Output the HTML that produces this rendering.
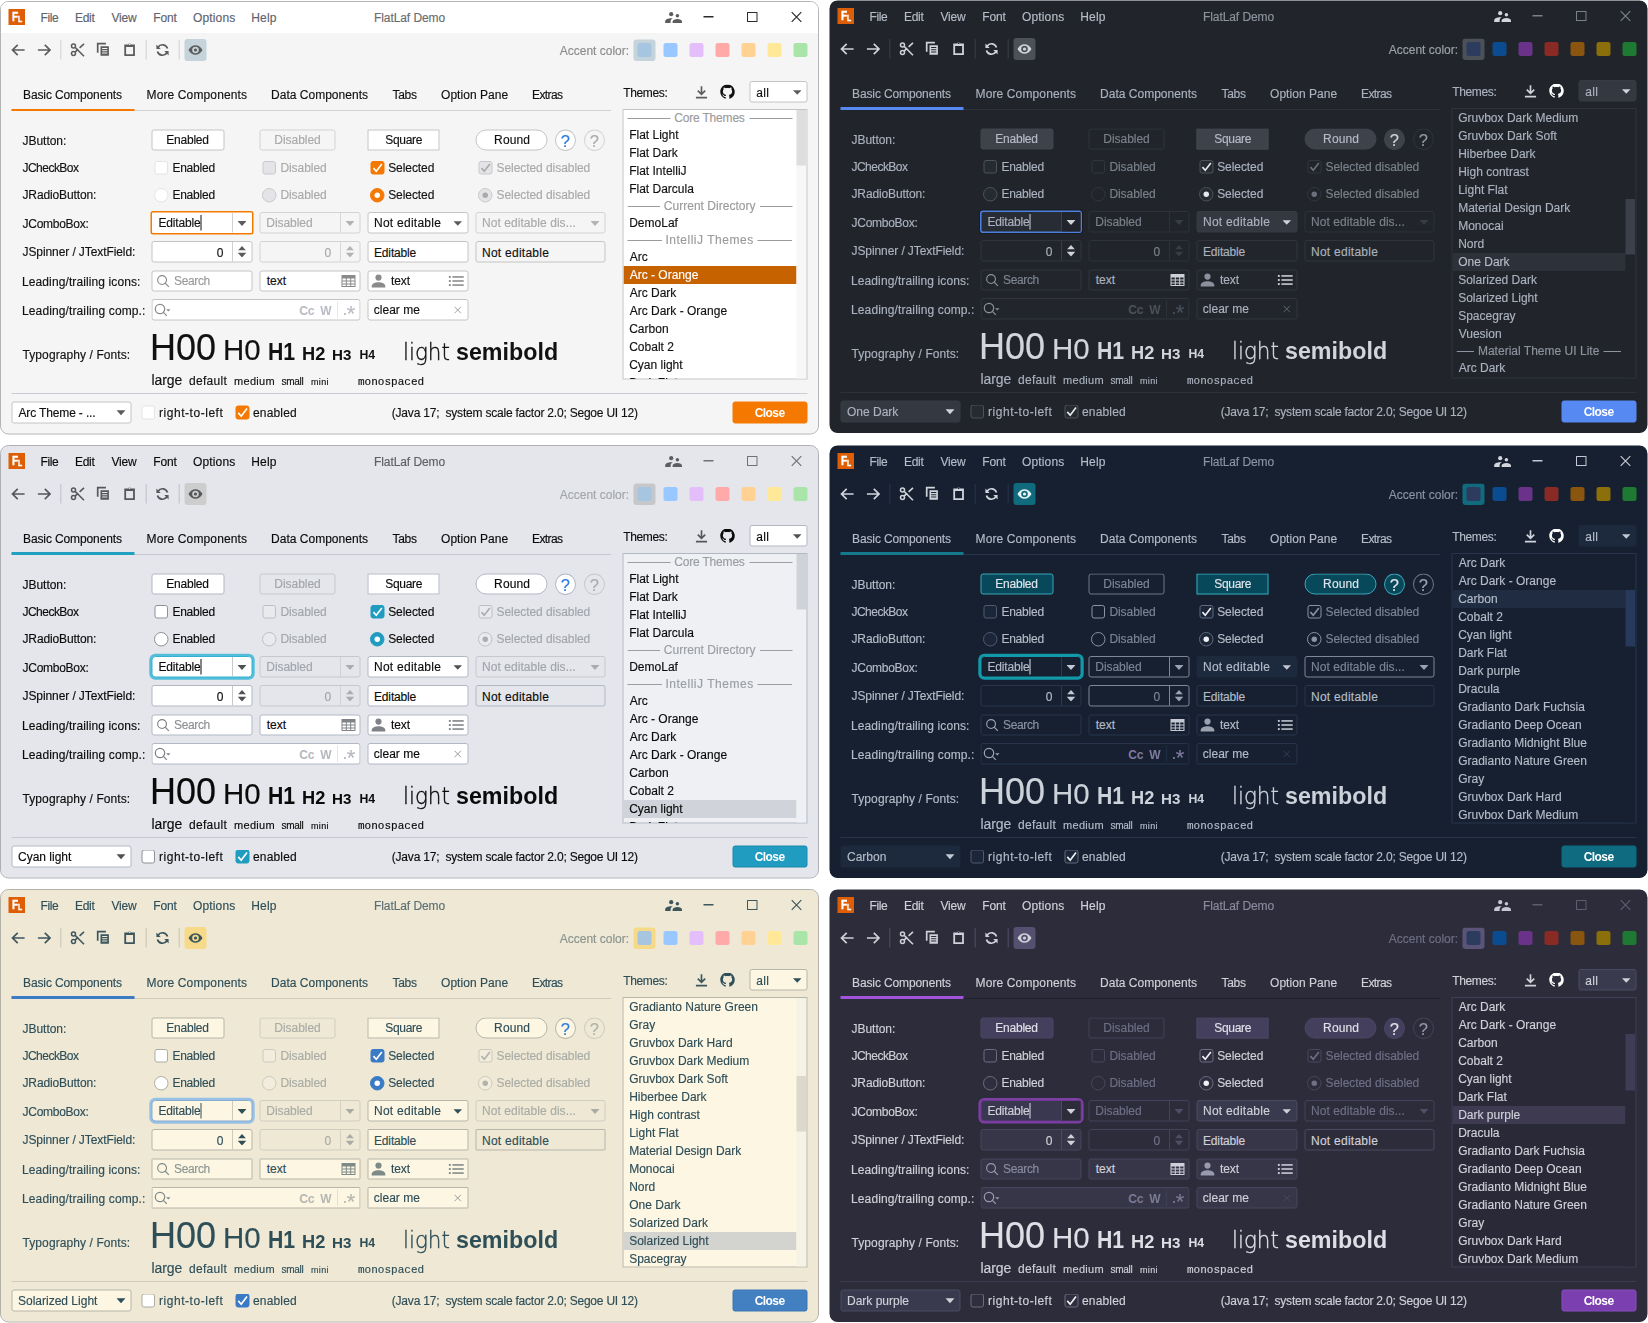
<!DOCTYPE html>
<html lang="en"><head><meta charset="utf-8"><title>FlatLaf Demo</title>
<style>
html,body{margin:0;padding:0;width:1648px;height:1323px;overflow:hidden;background:#fff}
#root{position:absolute;left:0;top:0;width:3296px;height:2646px;transform:scale(.5);transform-origin:0 0;font-family:"Liberation Sans",sans-serif}
.win{position:absolute;width:1640px;height:872px}
.win div,.win span,.win svg{position:absolute;box-sizing:border-box}
.frame{border-radius:17px;background:var(--bg);background-clip:padding-box;border:var(--wbw) solid var(--wbd);overflow:hidden}
.tb{background:var(--tbg)}
.t{white-space:pre;line-height:1;color:var(--fg);-webkit-text-stroke:.3px currentColor}
.dis{color:var(--fgd)}
.mn{color:var(--mfg)}
.ti{color:var(--tfg)}
.cat{color:var(--catfg)}
.b{font-weight:bold;-webkit-text-stroke:0}
.mono{font-family:"Liberation Mono",monospace}
.lt{font-family:"DejaVu Sans","Liberation Sans",sans-serif;font-weight:200;-webkit-text-stroke:.7px currentColor}
.i{color:var(--ic);overflow:visible}
.bx{border:2px solid;border-radius:5px}
.ln{background:var(--sep)}
</style></head>
<body>

<svg width="0" height="0" style="position:absolute"><defs>
<symbol id="back" viewBox="0 0 16 16"><path d="M14.6 8H3M7.7 2.8L2.5 8l5.2 5.2" fill="none" stroke="currentColor" stroke-width="1.7"/></symbol>
<symbol id="fwd" viewBox="0 0 16 16"><path d="M1.4 8H13M8.3 2.8L13.5 8l-5.2 5.2" fill="none" stroke="currentColor" stroke-width="1.7"/></symbol>
<symbol id="cut" viewBox="0 0 16 16"><g fill="none" stroke="currentColor" stroke-width="1.5"><circle cx="3.5" cy="3.9" r="2"/><circle cx="3.5" cy="11.6" r="2"/><path d="M5 5.3L14 14.2M5 10.2l3.2-3M9.6 5.8L14 1.8" stroke-width="1.6"/></g></symbol>
<symbol id="copy" viewBox="0 0 16 16"><path d="M2.2 10.8V1.7h8.2" fill="none" stroke="currentColor" stroke-width="1.7"/><path fill-rule="evenodd" fill="currentColor" d="M5 4.2h8.4v9.6H5zM6.6 6h5.2v1H6.6zM6.6 8.2h5.2v1H6.6zM6.6 10.4h5.2v1H6.6z"/></symbol>
<symbol id="paste" viewBox="0 0 16 16"><path fill-rule="evenodd" fill="currentColor" d="M2.3 2.4h3.5a2.1 1.6 0 0 1 3.6 0h3.5v11.6H2.3zM4.1 4.900v7.300h7V4.900zM6.6 2.4a1 .7 0 0 0 2 0a1 .7 0 0 0-2 0z"/></symbol>
<symbol id="refresh" viewBox="0 0 16 16"><g fill="none" stroke="currentColor" stroke-width="1.7"><path d="M13 6.6A5.2 5.2 0 0 0 3.6 5.2"/><path d="M3 9.4a5.2 5.2 0 0 0 9.4 1.4"/></g><path fill="currentColor" d="M1.9 2.6v4.3h4.3zM14.1 13.4V9.1H9.8z"/></symbol>
<symbol id="eye" viewBox="0 0 16 16"><path fill-rule="evenodd" fill="currentColor" d="M1 8C2.6 4.9 5.2 3.2 8 3.2S13.4 4.900 15 8c-1.600 3.100-4.200 4.800-7 4.800S2.600 11.100 1 8zM8 4.700a3.300 3.300 0 1 0 0 6.600a3.300 3.300 0 1 0 0-6.600zM8 6.400a1.600 1.600 0 1 1 0 3.200a1.600 1.600 0 1 1 0-3.200z"/></symbol>
<symbol id="users" viewBox="0 0 17 11.3"><g fill="currentColor"><circle cx="6.2" cy="2.1" r="2.1"/><circle cx="12.4" cy="3.7" r="1.75"/><path d="M0.2 10.8V9.3C0.2 7.200 3 6.100 6.400 6.100c0.600 0 1 0 1.400 0.100C6.200 7 5.600 8.200 5.600 9.600v1.200z"/><path d="M7.600 10.800V9.700c0-1.800 2.400-2.800 4.800-2.800s4.600 1 4.600 2.800v1.100z"/></g></symbol>
<symbol id="tri" viewBox="0 0 9 5"><path fill="currentColor" d="M0 0h9L4.500 5z"/></symbol>
<symbol id="triup" viewBox="0 0 9 5"><path fill="currentColor" d="M0 5h9L4.500 0z"/></symbol>
<symbol id="check" viewBox="0 0 14 14"><path d="M2.800 7.400l2.900 3.300l5.800-7.600" fill="none" stroke="currentColor" stroke-width="1.700"/></symbol>
<symbol id="search" viewBox="0 0 16 16"><g fill="none" stroke="currentColor" stroke-width="1.200"><circle cx="7" cy="7" r="4.700"/><path d="M10.400 10.400L14.300 14.300"/></g></symbol>
<symbol id="searchdd" viewBox="0 0 18 16"><g fill="none" stroke="currentColor" stroke-width="1.200"><circle cx="6.500" cy="7" r="4.700"/><path d="M9.900 10.400L13.300 13.800"/></g><path fill="currentColor" d="M12.600 7.200h4.400l-2.200 2.400z"/></symbol>
<symbol id="table" viewBox="0 0 16 16"><path fill-rule="evenodd" fill="currentColor" d="M1 2h14v12H1zM2 5.500v2h3.300v-2zM6.300 5.500v2h3.400v-2zM10.700 5.500v2H14v-2zM2 8.500v2h3.300v-2zM6.300 8.500v2h3.400v-2zM10.700 8.500v2H14v-2zM2 11.500V13h3.300v-1.500zM6.300 11.500V13h3.400v-1.500zM10.700 11.500V13H14v-1.500z"/></symbol>
<symbol id="user" viewBox="0 0 16 16"><g fill="currentColor"><circle cx="8" cy="4.600" r="3.100"/><path d="M1.200 14.500v-1.300c0-2.600 3.600-4 6.800-4s6.800 1.400 6.800 4v1.300z"/></g></symbol>
<symbol id="listi" viewBox="0 0 16 12"><g fill="currentColor"><rect x="0.300" y="0.800" width="2" height="2"/><rect x="0.300" y="5" width="2" height="2"/><rect x="0.300" y="9.200" width="2" height="2"/><rect x="4" y="1" width="11.700" height="1.600"/><rect x="4" y="5.200" width="11.700" height="1.600"/><rect x="4" y="9.400" width="11.700" height="1.600"/></g></symbol>
<symbol id="xx" viewBox="0 0 10 10"><path d="M1 1l8 8M9 1l-8 8" fill="none" stroke="currentColor" stroke-width="1"/></symbol>
<symbol id="dl" viewBox="0 0 14 14"><path d="M7 0.500v8.500M3 5.300l4 4l4-4M1 12.800h12" fill="none" stroke="currentColor" stroke-width="1.800"/></symbol>
<symbol id="gh" viewBox="0 0 16 16"><path fill="currentColor" d="M8 0C3.580 0 0 3.580 0 8c0 3.540 2.290 6.530 5.470 7.590.4.070.55-.17.55-.38 0-.19-.01-.82-.01-1.490-2.010.37-2.530-.49-2.690-.94-.09-.23-.48-.94-.82-1.130-.28-.15-.68-.52-.01-.53.630-.01 1.080.58 1.230.82.720 1.210 1.870.87 2.330.66.070-.52.280-.87.510-1.070-1.780-.2-3.640-.89-3.640-3.950 0-.87.310-1.590.82-2.150-.08-.2-.36-1.020.08-2.120 0 0 .67-.21 2.200.82.640-.18 1.320-.27 2-.27s1.360.09 2 .27c1.530-1.040 2.200-.82 2.200-.82.440 1.100.16 1.920.08 2.120.51.560.82 1.270.82 2.150 0 3.070-1.870 3.750-3.650 3.950.29.250.54.730.54 1.480 0 1.070-.01 1.930-.01 2.200 0 .21.150.46.550.38A8.013 8.013 0 0 0 16 8c0-4.420-3.580-8-8-8z"/></symbol>
</defs></svg>
<div id="root">
<div class="win" style="left:0px;top:0px;--bg:#f5f5f5;--tbg:#ffffff;--wbd:#b4b4b4;--fg:#111111;--fgd:#a9a9a9;--mfg:#5e636d;--tfg:#6c6c6c;--tic:#2b2b2b;--ic:#5c5c5c;--tsep:#dcdde0;--tgl:#c5d3da;--acfg:#8c8c8c;--swsel:#c5d3da;--tabline:#d1d1d1;--acc:#f57900;--btnbg:#ffffff;--btnbd:#c4c4c4;--btndbg:#f5f5f5;--btndbd:#d3d3d3;--helpfg:#2d7ce0;--helpdfg:#ababab;--cbbg:#ffffff;--cbbd:#e3e3ea;--cbdbg:#e4e4e8;--cbdbd:#c9c9c9;--cbsbg:#f57900;--cbsbd:#f57900;--cbck:#ffffff;--cbsdbg:#e4e4e8;--cbsdbd:#c9c9c9;--cbsdck:#a9a9a9;--rdot:#ffffff;--cobg:#ffffff;--cobd:#c4c4c4;--codbg:#f5f5f5;--codbd:#d3d3d3;--coar:#5c5c5c;--codar:#b3b3b3;--cosep:#d0d0d0;--codsep:#d8d8d8;--focus:#f57900;--fbg:#ffffff;--fbd:#c4c4c4;--fdbg:#f5f5f5;--fdbd:#d3d3d3;--fnebg:#f5f5f5;--fic:#8a8a8a;--ficd:#b8bcc4;--ph:#9a9a9a;--lbg:#ffffff;--lbd:#c4c4c4;--lsel:#c76200;--lselfg:#ffffff;--catfg:#9b9b9b;--catln:#9b9b9b;--sbtrack:#f7f7f7;--sbthumb:#dddee0;--sep:#c9ccd3;--clbg:#f57900;--clbd:#f57900;--clfg:#ffffff;--caret:#111111;--focus2:#f57900;--uic:#5c5c5c;--eyeic:#5c5c5c;--btnfg:#111111;--helpbg:#ffffff;--helpbd:#c4c4c4;--helpdbg:#f5f5f5;--fnebd:#c4c4c4;--xic:#8a8a8a;--ghic:#111111;--fic2:#8a8a8a;--hfg:#111111;--tfrad:5px;--wbw:2px;--cebg:#ffffff;--cobtn:#ffffff"><div class="frame" style="left:0px;top:2px;width:1638px;height:867px;"></div>
<div class="tb" style="left:2px;top:4px;width:1634px;height:62px;border-radius:15px 15px 0 0"></div>
<div style="left:17px;top:18px;width:33px;height:32px;background:#dd5e05"></div>
<span class="t b" style="left:24px;top:20px;font-size:26px;color:#fff;-webkit-text-stroke:.8px #fff;transform:scaleX(.78);transform-origin:0 0">F</span>
<span class="t b" style="left:35.5px;top:26.5px;font-size:19px;color:#fff;-webkit-text-stroke:.8px #fff;transform:scaleX(.72);transform-origin:0 0">L</span>
<span class="t mn" style="left:81.0px;top:23.5px;font-size:24px;letter-spacing:-0.71px;">File</span>
<span class="t mn" style="left:150.0px;top:23.5px;font-size:24px;letter-spacing:-0.56px;">Edit</span>
<span class="t mn" style="left:223.2px;top:23.5px;font-size:24px;letter-spacing:-0.55px;">View</span>
<span class="t mn" style="left:306.6px;top:23.5px;font-size:24px;letter-spacing:-0.25px;">Font</span>
<span class="t mn" style="left:386.0px;top:23.5px;font-size:24px;letter-spacing:0.28px;">Options</span>
<span class="t mn" style="left:502.6px;top:23.5px;font-size:24px;letter-spacing:0.26px;">Help</span>
<span class="t ti" style="left:748.0px;top:23.5px;font-size:24px;letter-spacing:-0.16px;">FlatLaf Demo</span>
<svg class="i " style="left:1330px;top:24px;color:var(--uic)" width="34" height="23"><use href="#users"/></svg>
<div class="" style="left:1407px;top:32px;width:20px;height:3px;background:var(--tic)"></div>
<div class="" style="left:1494px;top:24px;width:21px;height:20px;border:2px solid var(--tic);border-radius:1px"></div>
<svg class="i " style="left:1581px;top:22px;color:var(--tic)" width="24" height="24"><use href="#xx"/></svg>
<svg class="i " style="left:20px;top:84px;" width="32" height="32"><use href="#back"/></svg>
<svg class="i " style="left:73px;top:84px;" width="32" height="32"><use href="#fwd"/></svg>
<div class="" style="left:120px;top:80px;width:3px;height:39px;background:var(--tsep)"></div>
<svg class="i " style="left:140px;top:84px;" width="32" height="32"><use href="#cut"/></svg>
<svg class="i " style="left:191px;top:84px;" width="32" height="32"><use href="#copy"/></svg>
<svg class="i " style="left:244px;top:84px;" width="32" height="32"><use href="#paste"/></svg>
<div class="" style="left:291px;top:80px;width:3px;height:39px;background:var(--tsep)"></div>
<svg class="i " style="left:309px;top:84px;" width="32" height="32"><use href="#refresh"/></svg>
<div class="" style="left:357px;top:80px;width:3px;height:39px;background:var(--tsep)"></div>
<div class="" style="left:369px;top:78px;width:44px;height:44px;background:var(--tgl);border-radius:6px"></div>
<svg class="i " style="left:375px;top:84px;color:var(--eyeic)" width="32" height="32"><use href="#eye"/></svg>
<span class="t " style="left:1119.6px;top:89.5px;font-size:24px;letter-spacing:-0.02px;color:var(--acfg)">Accent color:</span>
<div class="" style="left:1267px;top:79px;width:44px;height:43px;background:var(--swsel);border-radius:6px"></div>
<div class="" style="left:1275px;top:86px;width:28px;height:28px;background:#a5c5e0;border-radius:5px"></div>
<div class="" style="left:1327px;top:86px;width:28px;height:28px;background:#99c7ff;border-radius:5px"></div>
<div class="" style="left:1379px;top:86px;width:28px;height:28px;background:#e4bdfb;border-radius:5px"></div>
<div class="" style="left:1431px;top:86px;width:28px;height:28px;background:#ffa9a9;border-radius:5px"></div>
<div class="" style="left:1483px;top:86px;width:28px;height:28px;background:#ffd294;border-radius:5px"></div>
<div class="" style="left:1535px;top:86px;width:28px;height:28px;background:#ffe999;border-radius:5px"></div>
<div class="" style="left:1587px;top:86px;width:28px;height:28px;background:#a9e5a9;border-radius:5px"></div>
<span class="t " style="left:46.0px;top:176.7px;font-size:24px;letter-spacing:-0.23px;">Basic Components</span>
<span class="t " style="left:293.0px;top:176.7px;font-size:24px;letter-spacing:0.26px;">More Components</span>
<span class="t " style="left:542.0px;top:176.7px;font-size:24px;letter-spacing:0.04px;">Data Components</span>
<span class="t " style="left:785.0px;top:176.7px;font-size:24px;letter-spacing:-0.57px;">Tabs</span>
<span class="t " style="left:882.0px;top:176.7px;font-size:24px;letter-spacing:0.09px;">Option Pane</span>
<span class="t " style="left:1064.0px;top:176.7px;font-size:24px;letter-spacing:-1.20px;">Extras</span>
<div class="" style="left:23px;top:220px;width:1199px;height:2px;background:var(--tabline)"></div>
<div class="" style="left:23px;top:218px;width:246px;height:4px;background:var(--acc)"></div>
<span class="t " style="left:45.0px;top:269.1px;font-size:24px;letter-spacing:-0.06px;">JButton:</span>
<span class="t " style="left:45.0px;top:324.3px;font-size:24px;letter-spacing:-1.05px;">JCheckBox</span>
<span class="t " style="left:45.0px;top:378.3px;font-size:24px;letter-spacing:-0.26px;">JRadioButton:</span>
<span class="t " style="left:45.0px;top:434.9px;font-size:24px;letter-spacing:-0.52px;">JComboBox:</span>
<span class="t " style="left:45.0px;top:492.1px;font-size:24px;letter-spacing:-0.18px;">JSpinner / JTextField:</span>
<span class="t " style="left:44.0px;top:551.3px;font-size:24px;letter-spacing:0.21px;">Leading/trailing icons:</span>
<span class="t " style="left:44.0px;top:609.1px;font-size:24px;letter-spacing:0.24px;">Leading/trailing comp.:</span>
<span class="t " style="left:45.0px;top:697.9px;font-size:24px;letter-spacing:0.18px;">Typography / Fonts:</span>
<div class="bx" style="left:303px;top:259px;width:146px;height:42px;background:var(--btnbg);border-color:var(--btnbd)"></div>
<span class="t " style="left:332.6px;top:267.9px;font-size:24px;letter-spacing:-0.46px;color:var(--btnfg)">Enabled</span>
<div class="bx" style="left:519px;top:259px;width:152px;height:42px;background:var(--btndbg);border-color:var(--btndbd)"></div>
<span class="t dis" style="left:548.6px;top:267.9px;font-size:24px;letter-spacing:-0.06px;">Disabled</span>
<div class="bx" style="left:735px;top:259px;width:144px;height:42px;background:var(--btnbg);border-color:var(--btnbd);border-radius:0"></div>
<span class="t " style="left:770.4px;top:267.9px;font-size:24px;letter-spacing:-0.57px;color:var(--btnfg)">Square</span>
<div class="bx" style="left:951px;top:259px;width:144px;height:42px;background:var(--btnbg);border-color:var(--btnbd);border-radius:22px"></div>
<span class="t " style="left:988.2px;top:267.9px;font-size:24px;letter-spacing:0.26px;color:var(--btnfg)">Round</span>
<div class="bx" style="left:1110px;top:259px;width:42px;height:43px;background:var(--helpbg);border-color:var(--helpbd);border-radius:50%"></div>
<span class="t " style="left:1121.4px;top:265.1px;font-size:33px;color:var(--helpfg)">?</span>
<div class="bx" style="left:1168px;top:259px;width:42px;height:43px;background:var(--helpdbg);border-color:var(--btndbd);border-radius:50%"></div>
<span class="t " style="left:1179.4px;top:265.1px;font-size:33px;color:var(--helpdfg)">?</span>
<div class="bx" style="left:309px;top:322px;width:27px;height:27px;background:var(--cbbg);border-color:var(--cbbd);border-radius:5px"></div>
<span class="t " style="left:344.8px;top:324.3px;font-size:24px;letter-spacing:-0.46px;">Enabled</span>
<div class="bx" style="left:525px;top:322px;width:27px;height:27px;background:var(--cbdbg);border-color:var(--cbdbd);border-radius:5px"></div>
<span class="t dis" style="left:560.8px;top:324.3px;font-size:24px;letter-spacing:-0.12px;">Disabled</span>
<div class="bx" style="left:741px;top:322px;width:28px;height:27px;background:var(--cbsbg);border-color:var(--cbsbd);border-radius:5px"></div>
<svg class="i " style="left:741px;top:322px;color:var(--cbck)" width="28" height="27"><use href="#check"/></svg>
<span class="t " style="left:776.4px;top:324.3px;font-size:24px;letter-spacing:-0.15px;">Selected</span>
<div class="bx" style="left:957px;top:322px;width:28px;height:27px;background:var(--cbsdbg);border-color:var(--cbsdbd);border-radius:5px"></div>
<svg class="i " style="left:957px;top:322px;color:var(--cbsdck)" width="28" height="27"><use href="#check"/></svg>
<span class="t dis" style="left:993.0px;top:324.3px;font-size:24px;letter-spacing:-0.12px;">Selected disabled</span>
<div class="bx" style="left:308px;top:376px;width:29px;height:29px;background:var(--cbbg);border-color:var(--cbbd);border-radius:50%"></div>
<span class="t " style="left:344.8px;top:378.3px;font-size:24px;letter-spacing:-0.46px;">Enabled</span>
<div class="bx" style="left:524px;top:376px;width:29px;height:29px;background:var(--cbdbg);border-color:var(--cbdbd);border-radius:50%"></div>
<span class="t dis" style="left:560.8px;top:378.3px;font-size:24px;letter-spacing:-0.12px;">Disabled</span>
<div class="bx" style="left:740px;top:376px;width:29px;height:29px;background:var(--cbsbg);border-color:var(--cbsbd);border-radius:50%"></div>
<div class="" style="left:749px;top:385px;width:11px;height:11px;background:var(--rdot);border-radius:50%"></div>
<span class="t " style="left:776.4px;top:378.3px;font-size:24px;letter-spacing:-0.15px;">Selected</span>
<div class="bx" style="left:956px;top:376px;width:29px;height:29px;background:var(--cbsdbg);border-color:var(--cbsdbd);border-radius:50%"></div>
<div class="" style="left:965px;top:385px;width:11px;height:11px;background:var(--cbsdck);border-radius:50%"></div>
<span class="t dis" style="left:993.0px;top:378.3px;font-size:24px;letter-spacing:-0.12px;">Selected disabled</span>
<div class="bx" style="left:301px;top:422px;width:206px;height:47px;background:var(--cebg);border-color:var(--focus);border-width:3.2px;box-shadow:0 0 0 0px var(--focus2);border-radius:5.0px"></div>
<div class="" style="left:464px;top:426px;width:2px;height:39px;background:var(--cosep)"></div>
<svg class="i " style="left:475px;top:442px;color:var(--coar)" width="18" height="10"><use href="#tri"/></svg>
<span class="t " style="left:316.8px;top:433.9px;font-size:24px;letter-spacing:-0.31px;">Editable</span>
<div class="" style="left:401px;top:430px;width:2px;height:31px;background:var(--caret)"></div>
<div class="bx" style="left:519px;top:424px;width:202px;height:43px;background:var(--codbg);border-color:var(--codbd)"></div>
<div class="" style="left:680px;top:426px;width:2px;height:39px;background:var(--codsep)"></div>
<svg class="i " style="left:691px;top:442px;color:var(--codar)" width="18" height="10"><use href="#tri"/></svg>
<span class="t dis" style="left:532.6px;top:433.9px;font-size:24px;letter-spacing:-0.09px;">Disabled</span>
<div class="bx" style="left:735px;top:424px;width:202px;height:43px;background:var(--cobg);border-color:var(--cobd)"></div>
<svg class="i " style="left:907px;top:442px;color:var(--coar)" width="17" height="10"><use href="#tri"/></svg>
<span class="t " style="left:748.0px;top:433.9px;font-size:24px;letter-spacing:0.51px;">Not editable</span>
<div class="bx" style="left:951px;top:424px;width:260px;height:43px;background:var(--codbg);border-color:var(--codbd)"></div>
<svg class="i " style="left:1181px;top:442px;color:var(--codar)" width="18" height="10"><use href="#tri"/></svg>
<span class="t dis" style="left:964.0px;top:433.9px;font-size:24px;letter-spacing:0.12px;">Not editable dis...</span>
<div class="bx" style="left:303px;top:482px;width:202px;height:43px;background:var(--fbg);border-color:var(--fbd)"></div>
<div class="" style="left:464px;top:484px;width:2px;height:39px;background:var(--cosep)"></div>
<svg class="i " style="left:475px;top:492px;color:var(--coar)" width="18" height="9"><use href="#triup"/></svg>
<svg class="i " style="left:475px;top:505px;color:var(--coar)" width="18" height="10"><use href="#tri"/></svg>
<span class="t " style="left:433.6px;top:493.1px;font-size:24px;">0</span>
<div class="bx" style="left:519px;top:482px;width:202px;height:43px;background:var(--fdbg);border-color:var(--fdbd)"></div>
<div class="" style="left:680px;top:484px;width:2px;height:39px;background:var(--codsep)"></div>
<svg class="i " style="left:691px;top:492px;color:var(--codar)" width="18" height="9"><use href="#triup"/></svg>
<svg class="i " style="left:691px;top:505px;color:var(--codar)" width="18" height="10"><use href="#tri"/></svg>
<span class="t dis" style="left:649.2px;top:493.1px;font-size:24px;">0</span>
<div class="bx" style="left:735px;top:482px;width:202px;height:43px;background:var(--fbg);border-color:var(--fbd);border-radius:var(--tfrad)"></div>
<span class="t " style="left:748.0px;top:493.1px;font-size:24px;letter-spacing:-0.31px;">Editable</span>
<div class="bx" style="left:951px;top:482px;width:260px;height:43px;background:var(--fnebg);border-color:var(--fnebd);border-radius:var(--tfrad)"></div>
<span class="t " style="left:964.0px;top:493.1px;font-size:24px;letter-spacing:0.51px;">Not editable</span>
<div class="bx" style="left:303px;top:541px;width:202px;height:42px;background:var(--fbg);border-color:var(--fbd);border-radius:var(--tfrad)"></div>
<svg class="i " style="left:311px;top:547px;color:var(--fic)" width="30" height="30"><use href="#search"/></svg>
<span class="t " style="left:348.2px;top:549.9px;font-size:24px;letter-spacing:-0.78px;color:var(--ph)">Search</span>
<div class="bx" style="left:519px;top:541px;width:202px;height:42px;background:var(--fbg);border-color:var(--fbd);border-radius:var(--tfrad)"></div>
<span class="t " style="left:533.6px;top:549.9px;font-size:24px;letter-spacing:-0.07px;">text</span>
<svg class="i " style="left:681px;top:546px;color:var(--fic2)" width="32" height="32"><use href="#table"/></svg>
<div class="bx" style="left:735px;top:541px;width:202px;height:42px;background:var(--fbg);border-color:var(--fbd);border-radius:var(--tfrad)"></div>
<svg class="i " style="left:741px;top:546px;color:var(--fic)" width="32" height="32"><use href="#user"/></svg>
<span class="t " style="left:781.8px;top:549.9px;font-size:24px;letter-spacing:-0.07px;">text</span>
<svg class="i " style="left:897px;top:550px;color:var(--fic2)" width="31" height="24"><use href="#listi"/></svg>
<div class="bx" style="left:303px;top:598px;width:418px;height:43px;background:var(--fbg);border-color:var(--fbd);border-radius:var(--tfrad)"></div>
<svg class="i " style="left:307px;top:604px;color:var(--fic)" width="36" height="32"><use href="#searchdd"/></svg>
<span class="t b" style="left:598.4px;top:608.5px;font-size:24px;letter-spacing:-0.33px;color:var(--ficd)">Cc</span>
<span class="t b" style="left:640.4px;top:608.5px;font-size:24px;color:var(--ficd)">W</span>
<div class="" style="left:675px;top:603px;width:1px;height:33px;background:var(--cosep)"></div>
<span class="t b" style="left:686.6px;top:608.5px;font-size:24px;color:var(--ficd)">.</span>
<span class="t " style="left:693.6px;top:605.4px;font-size:44px;color:var(--ficd)">*</span>
<div class="bx" style="left:735px;top:598px;width:202px;height:43px;background:var(--fbg);border-color:var(--fbd);border-radius:var(--tfrad)"></div>
<span class="t " style="left:747.6px;top:608.3px;font-size:24px;letter-spacing:0.02px;">clear me</span>
<svg class="i " style="left:907px;top:612px;color:var(--xic)" width="17" height="16"><use href="#xx"/></svg>
<span class="t " style="left:300.0px;top:658.9px;font-size:72px;transform:scaleX(1.000);transform-origin:0 0;color:var(--hfg)">H00</span>
<span class="t " style="left:446.1px;top:669.0px;font-size:60px;transform:scaleX(0.981);transform-origin:0 0;color:var(--hfg)">H0</span>
<span class="t b" style="left:536.3px;top:679.2px;font-size:48px;transform:scaleX(0.884);transform-origin:0 0;color:var(--hfg)">H1</span>
<span class="t b" style="left:604.4px;top:689.3px;font-size:36px;transform:scaleX(1.014);transform-origin:0 0;color:var(--hfg)">H2</span>
<span class="t b" style="left:664.4px;top:694.4px;font-size:30px;transform:scaleX(1.009);transform-origin:0 0;color:var(--hfg)">H3</span>
<span class="t b" style="left:719.0px;top:697.5px;font-size:24px;transform:scaleX(1.022);transform-origin:0 0;color:var(--hfg)">H4</span>
<span class="t lt" style="left:806.2px;top:681.7px;font-size:45px;transform:scaleX(0.955);transform-origin:0 0;color:var(--hfg)">light</span>
<span class="t b" style="left:912.0px;top:679.2px;font-size:48px;transform:scaleX(0.969);transform-origin:0 0;color:var(--hfg)">semibold</span>
<span class="t " style="left:303.0px;top:745.7px;font-size:28px;letter-spacing:-0.17px;">large</span>
<span class="t " style="left:378.0px;top:749.1px;font-size:24px;letter-spacing:0.60px;">default</span>
<span class="t " style="left:468.0px;top:750.8px;font-size:22px;letter-spacing:0.62px;">medium</span>
<span class="t " style="left:563.0px;top:751.5px;font-size:20px;letter-spacing:-0.56px;">small</span>
<span class="t " style="left:622.0px;top:754.2px;font-size:18px;letter-spacing:0.67px;">mini</span>
<span class="t mono" style="left:716.0px;top:752.5px;font-size:22px;letter-spacing:0.02px;">monospaced</span>
<div class="ln" style="left:23px;top:786px;width:1592px;height:2px;"></div>
<div class="bx" style="left:23px;top:803px;width:240px;height:44px;background:var(--cobg);border-color:var(--cobd)"></div>
<span class="t " style="left:37.0px;top:814.3px;font-size:24px;letter-spacing:-0.29px;">Arc Theme - ...</span>
<svg class="i " style="left:233px;top:820px;color:var(--coar)" width="18" height="11"><use href="#tri"/></svg>
<div class="bx" style="left:283px;top:811px;width:27px;height:28px;background:var(--cbbg);border-color:var(--cbbd);border-radius:5px"></div>
<span class="t " style="left:318.0px;top:814.3px;font-size:24px;letter-spacing:1.08px;">right-to-left</span>
<div class="bx" style="left:471px;top:811px;width:28px;height:28px;background:var(--cbsbg);border-color:var(--cbsbd);border-radius:5px"></div>
<svg class="i " style="left:471px;top:811px;color:var(--cbck)" width="28" height="28"><use href="#check"/></svg>
<span class="t " style="left:506.0px;top:814.3px;font-size:24px;letter-spacing:0.32px;">enabled</span>
<span class="t " style="left:783.6px;top:814.3px;font-size:24px;letter-spacing:-0.42px;">(Java 17;  system scale factor 2.0; Segoe UI 12)</span>
<div class="bx" style="left:1465px;top:803px;width:150px;height:44px;background:var(--clbg);border-color:var(--clbd)"></div>
<span class="t b" style="left:1509.4px;top:814.3px;font-size:24px;letter-spacing:-1.15px;color:var(--clfg)">Close</span>
<span class="t " style="left:1246.4px;top:173.1px;font-size:24px;letter-spacing:-0.68px;">Themes:</span>
<svg class="i " style="left:1390px;top:171px;color:var(--ic)" width="26" height="27"><use href="#dl"/></svg>
<svg class="i " style="left:1440px;top:169px;color:var(--ghic)" width="30" height="29"><use href="#gh"/></svg>
<div class="bx" style="left:1499px;top:162px;width:116px;height:43px;background:var(--cobg);border-color:var(--cobd)"></div>
<span class="t " style="left:1512.6px;top:173.1px;font-size:24px;letter-spacing:0.66px;">all</span>
<svg class="i " style="left:1586px;top:180px;color:var(--coar)" width="17" height="10"><use href="#tri"/></svg>
<div class="bx" style="left:1245px;top:218px;width:370px;height:541px;background:var(--lbg);border-color:var(--lbd);border-radius:0;overflow:hidden"><div style="left:8px;top:16px;width:86px;height:2px;background:var(--catln)"></div><div style="left:252px;top:16px;width:86px;height:2px;background:var(--catln)"></div><span class="t cat" style="left:101.4px;top:4.1px;font-size:24px;letter-spacing:-0.36px;">Core Themes</span><span class="t " style="left:11.4px;top:37.5px;font-size:24px;">Flat Light</span><span class="t " style="left:11.4px;top:73.5px;font-size:24px;">Flat Dark</span><span class="t " style="left:11.4px;top:109.5px;font-size:24px;">Flat IntelliJ</span><span class="t " style="left:11.4px;top:145.5px;font-size:24px;">Flat Darcula</span><div style="left:8px;top:192px;width:65px;height:2px;background:var(--catln)"></div><div style="left:273px;top:192px;width:65px;height:2px;background:var(--catln)"></div><span class="t cat" style="left:80.5px;top:180.1px;font-size:24px;letter-spacing:0.06px;">Current Directory</span><span class="t " style="left:11.4px;top:213.5px;font-size:24px;">DemoLaf</span><div style="left:8px;top:260px;width:69px;height:2px;background:var(--catln)"></div><div style="left:268px;top:260px;width:69px;height:2px;background:var(--catln)"></div><span class="t cat" style="left:83.8px;top:248.1px;font-size:24px;letter-spacing:1.04px;">IntelliJ Themes</span><span class="t " style="left:12.4px;top:281.5px;font-size:24px;">Arc</span><div style="left:0;top:312px;width:346px;height:36px;background:var(--lsel)"></div><span class="t " style="left:12.4px;top:317.5px;font-size:24px;color:var(--lselfg)">Arc - Orange</span><span class="t " style="left:12.4px;top:353.5px;font-size:24px;">Arc Dark</span><span class="t " style="left:12.4px;top:389.5px;font-size:24px;">Arc Dark - Orange</span><span class="t " style="left:11.4px;top:425.5px;font-size:24px;">Carbon</span><span class="t " style="left:11.4px;top:461.5px;font-size:24px;">Cobalt 2</span><span class="t " style="left:11.4px;top:497.5px;font-size:24px;">Cyan light</span><span class="t " style="left:11.4px;top:533.5px;font-size:24px;">Dark Flat</span><div style="left:346px;top:0;width:19px;height:540px;background:var(--sbtrack)"></div><div style="left:346px;top:0px;width:19px;height:111px;background:var(--sbthumb)"></div></div></div>
<div class="win" style="left:1658px;top:-2px;--bg:#21252b;--tbg:#21252b;--wbd:transparent;--fg:#abb2bf;--fgd:#7a808b;--mfg:#b6bcc8;--tfg:#8d939e;--tic:#7b818c;--ic:#d0d3d9;--tsep:#31363e;--tgl:#4b5059;--acfg:#9ba1ac;--swsel:#4b5059;--tabline:#2c313a;--acc:#568af2;--btnbg:#3d424b;--btnbd:#40454e;--btndbg:#21252b;--btndbd:#2f343c;--helpfg:#d0d3d9;--helpdfg:#9097a3;--cbbg:#262a31;--cbbd:#4d525c;--cbdbg:#21252b;--cbdbd:#31363e;--cbsbg:#262a31;--cbsbd:#4d525c;--cbck:#e6e8eb;--cbsdbg:#21252b;--cbsdbd:#31363e;--cbsdck:#6b717c;--rdot:#e6e8eb;--cobg:#333841;--cobd:#363b44;--codbg:#21252b;--codbd:#2d323a;--coar:#d0d3d9;--codar:#373c45;--cosep:#3a3f48;--codsep:#2d323a;--focus:#4d80de;--fbg:#22262c;--fbd:#30353d;--fdbg:#21252b;--fdbd:#2d323a;--fnebg:#21252b;--fic:#8b919c;--ficd:#4a505b;--ph:#7f8590;--lbg:#21252b;--lbd:#2f343c;--lsel:#2c313a;--lselfg:#b6bcc8;--catfg:#8d939e;--catln:#8d939e;--sbtrack:#21252b;--sbthumb:#3b404a;--sep:#2c313a;--clbg:#568af2;--clbd:#568af2;--clfg:#ffffff;--caret:#d0d3d9;--wbw:1px;--uic:#d3d6db;--btnfg:#b6bcc8;--focus2:#181b20;--cebg:#282c34;--cobtn:#21252b;--fnebd:#30353d;--fic2:#cdd0d6;--xic:#6f7580;--ghic:#ffffff;--hfg:#d2d5db;--eyeic:#d0d3d9;--helpbg:#3d424b;--helpbd:#40454e;--helpdbg:#21252b;--tfrad:5px"><div class="frame" style="left:0px;top:2px;width:1638px;height:867px;"></div>
<div style="left:17px;top:18px;width:33px;height:32px;background:#dd5e05"></div>
<span class="t b" style="left:24px;top:20px;font-size:26px;color:#fff;-webkit-text-stroke:.8px #fff;transform:scaleX(.78);transform-origin:0 0">F</span>
<span class="t b" style="left:35.5px;top:26.5px;font-size:19px;color:#fff;-webkit-text-stroke:.8px #fff;transform:scaleX(.72);transform-origin:0 0">L</span>
<span class="t mn" style="left:81.0px;top:23.5px;font-size:24px;letter-spacing:-0.71px;">File</span>
<span class="t mn" style="left:150.0px;top:23.5px;font-size:24px;letter-spacing:-0.56px;">Edit</span>
<span class="t mn" style="left:223.2px;top:23.5px;font-size:24px;letter-spacing:-0.55px;">View</span>
<span class="t mn" style="left:306.6px;top:23.5px;font-size:24px;letter-spacing:-0.25px;">Font</span>
<span class="t mn" style="left:386.0px;top:23.5px;font-size:24px;letter-spacing:0.28px;">Options</span>
<span class="t mn" style="left:502.6px;top:23.5px;font-size:24px;letter-spacing:0.26px;">Help</span>
<span class="t ti" style="left:748.0px;top:23.5px;font-size:24px;letter-spacing:-0.16px;">FlatLaf Demo</span>
<svg class="i " style="left:1330px;top:24px;color:var(--uic)" width="34" height="23"><use href="#users"/></svg>
<div class="" style="left:1407px;top:32px;width:20px;height:3px;background:var(--tic)"></div>
<div class="" style="left:1494px;top:24px;width:21px;height:20px;border:2px solid var(--tic);border-radius:1px"></div>
<svg class="i " style="left:1581px;top:22px;color:var(--tic)" width="24" height="24"><use href="#xx"/></svg>
<svg class="i " style="left:20px;top:84px;" width="32" height="32"><use href="#back"/></svg>
<svg class="i " style="left:73px;top:84px;" width="32" height="32"><use href="#fwd"/></svg>
<div class="" style="left:120px;top:80px;width:3px;height:39px;background:var(--tsep)"></div>
<svg class="i " style="left:140px;top:84px;" width="32" height="32"><use href="#cut"/></svg>
<svg class="i " style="left:191px;top:84px;" width="32" height="32"><use href="#copy"/></svg>
<svg class="i " style="left:244px;top:84px;" width="32" height="32"><use href="#paste"/></svg>
<div class="" style="left:291px;top:80px;width:3px;height:39px;background:var(--tsep)"></div>
<svg class="i " style="left:309px;top:84px;" width="32" height="32"><use href="#refresh"/></svg>
<div class="" style="left:357px;top:80px;width:3px;height:39px;background:var(--tsep)"></div>
<div class="" style="left:369px;top:78px;width:44px;height:44px;background:var(--tgl);border-radius:6px"></div>
<svg class="i " style="left:375px;top:84px;color:var(--eyeic)" width="32" height="32"><use href="#eye"/></svg>
<span class="t " style="left:1119.6px;top:89.5px;font-size:24px;letter-spacing:-0.02px;color:var(--acfg)">Accent color:</span>
<div class="" style="left:1267px;top:79px;width:44px;height:43px;background:var(--swsel);border-radius:6px"></div>
<div class="" style="left:1275px;top:86px;width:28px;height:28px;background:#2c3b5e;border-radius:5px"></div>
<div class="" style="left:1327px;top:86px;width:28px;height:28px;background:#0b4c90;border-radius:5px"></div>
<div class="" style="left:1379px;top:86px;width:28px;height:28px;background:#6a3289;border-radius:5px"></div>
<div class="" style="left:1431px;top:86px;width:28px;height:28px;background:#8a2a25;border-radius:5px"></div>
<div class="" style="left:1483px;top:86px;width:28px;height:28px;background:#8a560f;border-radius:5px"></div>
<div class="" style="left:1535px;top:86px;width:28px;height:28px;background:#8a6f0a;border-radius:5px"></div>
<div class="" style="left:1587px;top:86px;width:28px;height:28px;background:#1e7a33;border-radius:5px"></div>
<span class="t " style="left:46.0px;top:176.7px;font-size:24px;letter-spacing:-0.23px;">Basic Components</span>
<span class="t " style="left:293.0px;top:176.7px;font-size:24px;letter-spacing:0.26px;">More Components</span>
<span class="t " style="left:542.0px;top:176.7px;font-size:24px;letter-spacing:0.04px;">Data Components</span>
<span class="t " style="left:785.0px;top:176.7px;font-size:24px;letter-spacing:-0.57px;">Tabs</span>
<span class="t " style="left:882.0px;top:176.7px;font-size:24px;letter-spacing:0.09px;">Option Pane</span>
<span class="t " style="left:1064.0px;top:176.7px;font-size:24px;letter-spacing:-1.20px;">Extras</span>
<div class="" style="left:23px;top:220px;width:1199px;height:2px;background:var(--tabline)"></div>
<div class="" style="left:23px;top:216px;width:246px;height:6px;background:var(--acc)"></div>
<span class="t " style="left:45.0px;top:269.1px;font-size:24px;letter-spacing:-0.06px;">JButton:</span>
<span class="t " style="left:45.0px;top:324.3px;font-size:24px;letter-spacing:-1.05px;">JCheckBox</span>
<span class="t " style="left:45.0px;top:378.3px;font-size:24px;letter-spacing:-0.26px;">JRadioButton:</span>
<span class="t " style="left:45.0px;top:434.9px;font-size:24px;letter-spacing:-0.52px;">JComboBox:</span>
<span class="t " style="left:45.0px;top:492.1px;font-size:24px;letter-spacing:-0.18px;">JSpinner / JTextField:</span>
<span class="t " style="left:44.0px;top:551.3px;font-size:24px;letter-spacing:0.21px;">Leading/trailing icons:</span>
<span class="t " style="left:44.0px;top:609.1px;font-size:24px;letter-spacing:0.24px;">Leading/trailing comp.:</span>
<span class="t " style="left:45.0px;top:697.9px;font-size:24px;letter-spacing:0.18px;">Typography / Fonts:</span>
<div class="bx" style="left:303px;top:259px;width:146px;height:42px;background:var(--btnbg);border-color:var(--btnbd)"></div>
<span class="t " style="left:332.6px;top:267.9px;font-size:24px;letter-spacing:-0.46px;color:var(--btnfg)">Enabled</span>
<div class="bx" style="left:519px;top:259px;width:152px;height:42px;background:var(--btndbg);border-color:var(--btndbd)"></div>
<span class="t dis" style="left:548.6px;top:267.9px;font-size:24px;letter-spacing:-0.06px;">Disabled</span>
<div class="bx" style="left:735px;top:259px;width:144px;height:42px;background:var(--btnbg);border-color:var(--btnbd);border-radius:0"></div>
<span class="t " style="left:770.4px;top:267.9px;font-size:24px;letter-spacing:-0.57px;color:var(--btnfg)">Square</span>
<div class="bx" style="left:951px;top:259px;width:144px;height:42px;background:var(--btnbg);border-color:var(--btnbd);border-radius:22px"></div>
<span class="t " style="left:988.2px;top:267.9px;font-size:24px;letter-spacing:0.26px;color:var(--btnfg)">Round</span>
<div class="bx" style="left:1110px;top:259px;width:42px;height:43px;background:var(--helpbg);border-color:var(--helpbd);border-radius:50%"></div>
<span class="t " style="left:1121.4px;top:265.1px;font-size:33px;color:var(--helpfg)">?</span>
<div class="bx" style="left:1168px;top:259px;width:42px;height:43px;background:var(--helpdbg);border-color:var(--btndbd);border-radius:50%"></div>
<span class="t " style="left:1179.4px;top:265.1px;font-size:33px;color:var(--helpdfg)">?</span>
<div class="bx" style="left:309px;top:322px;width:27px;height:27px;background:var(--cbbg);border-color:var(--cbbd);border-radius:5px"></div>
<span class="t " style="left:344.8px;top:324.3px;font-size:24px;letter-spacing:-0.46px;">Enabled</span>
<div class="bx" style="left:525px;top:322px;width:27px;height:27px;background:var(--cbdbg);border-color:var(--cbdbd);border-radius:5px"></div>
<span class="t dis" style="left:560.8px;top:324.3px;font-size:24px;letter-spacing:-0.12px;">Disabled</span>
<div class="bx" style="left:741px;top:322px;width:28px;height:27px;background:var(--cbsbg);border-color:var(--cbsbd);border-radius:5px"></div>
<svg class="i " style="left:741px;top:322px;color:var(--cbck)" width="28" height="27"><use href="#check"/></svg>
<span class="t " style="left:776.4px;top:324.3px;font-size:24px;letter-spacing:-0.15px;">Selected</span>
<div class="bx" style="left:957px;top:322px;width:28px;height:27px;background:var(--cbsdbg);border-color:var(--cbsdbd);border-radius:5px"></div>
<svg class="i " style="left:957px;top:322px;color:var(--cbsdck)" width="28" height="27"><use href="#check"/></svg>
<span class="t dis" style="left:993.0px;top:324.3px;font-size:24px;letter-spacing:-0.12px;">Selected disabled</span>
<div class="bx" style="left:308px;top:376px;width:29px;height:29px;background:var(--cbbg);border-color:var(--cbbd);border-radius:50%"></div>
<span class="t " style="left:344.8px;top:378.3px;font-size:24px;letter-spacing:-0.46px;">Enabled</span>
<div class="bx" style="left:524px;top:376px;width:29px;height:29px;background:var(--cbdbg);border-color:var(--cbdbd);border-radius:50%"></div>
<span class="t dis" style="left:560.8px;top:378.3px;font-size:24px;letter-spacing:-0.12px;">Disabled</span>
<div class="bx" style="left:740px;top:376px;width:29px;height:29px;background:var(--cbsbg);border-color:var(--cbsbd);border-radius:50%"></div>
<div class="" style="left:749px;top:385px;width:11px;height:11px;background:var(--rdot);border-radius:50%"></div>
<span class="t " style="left:776.4px;top:378.3px;font-size:24px;letter-spacing:-0.15px;">Selected</span>
<div class="bx" style="left:956px;top:376px;width:29px;height:29px;background:var(--cbsdbg);border-color:var(--cbsdbd);border-radius:50%"></div>
<div class="" style="left:965px;top:385px;width:11px;height:11px;background:var(--cbsdck);border-radius:50%"></div>
<span class="t dis" style="left:993.0px;top:378.3px;font-size:24px;letter-spacing:-0.12px;">Selected disabled</span>
<div class="bx" style="left:302px;top:423px;width:204px;height:45px;background:var(--cebg);border-color:var(--focus);border-width:3px;box-shadow:0 0 0 2px var(--focus2);border-radius:6.2px"></div>
<div class="" style="left:466px;top:426px;width:37px;height:39px;background:var(--cobtn)"></div>
<div class="" style="left:464px;top:426px;width:2px;height:39px;background:var(--cosep)"></div>
<svg class="i " style="left:475px;top:442px;color:var(--coar)" width="18" height="10"><use href="#tri"/></svg>
<span class="t " style="left:316.8px;top:433.9px;font-size:24px;letter-spacing:-0.31px;">Editable</span>
<div class="" style="left:401px;top:430px;width:2px;height:31px;background:var(--caret)"></div>
<div class="bx" style="left:519px;top:424px;width:202px;height:43px;background:var(--codbg);border-color:var(--codbd)"></div>
<div class="" style="left:680px;top:426px;width:2px;height:39px;background:var(--codsep)"></div>
<svg class="i " style="left:691px;top:442px;color:var(--codar)" width="18" height="10"><use href="#tri"/></svg>
<span class="t dis" style="left:532.6px;top:433.9px;font-size:24px;letter-spacing:-0.09px;">Disabled</span>
<div class="bx" style="left:735px;top:424px;width:202px;height:43px;background:var(--cobg);border-color:var(--cobd)"></div>
<svg class="i " style="left:907px;top:442px;color:var(--coar)" width="17" height="10"><use href="#tri"/></svg>
<span class="t " style="left:748.0px;top:433.9px;font-size:24px;letter-spacing:0.51px;">Not editable</span>
<div class="bx" style="left:951px;top:424px;width:260px;height:43px;background:var(--codbg);border-color:var(--codbd)"></div>
<svg class="i " style="left:1181px;top:442px;color:var(--codar)" width="18" height="10"><use href="#tri"/></svg>
<span class="t dis" style="left:964.0px;top:433.9px;font-size:24px;letter-spacing:0.12px;">Not editable dis...</span>
<div class="bx" style="left:303px;top:482px;width:202px;height:43px;background:var(--fbg);border-color:var(--fbd)"></div>
<div class="" style="left:464px;top:484px;width:2px;height:39px;background:var(--cosep)"></div>
<svg class="i " style="left:475px;top:492px;color:var(--coar)" width="18" height="9"><use href="#triup"/></svg>
<svg class="i " style="left:475px;top:505px;color:var(--coar)" width="18" height="10"><use href="#tri"/></svg>
<span class="t " style="left:433.6px;top:493.1px;font-size:24px;">0</span>
<div class="bx" style="left:519px;top:482px;width:202px;height:43px;background:var(--fdbg);border-color:var(--fdbd)"></div>
<div class="" style="left:680px;top:484px;width:2px;height:39px;background:var(--codsep)"></div>
<svg class="i " style="left:691px;top:492px;color:var(--codar)" width="18" height="9"><use href="#triup"/></svg>
<svg class="i " style="left:691px;top:505px;color:var(--codar)" width="18" height="10"><use href="#tri"/></svg>
<span class="t dis" style="left:649.2px;top:493.1px;font-size:24px;">0</span>
<div class="bx" style="left:735px;top:482px;width:202px;height:43px;background:var(--fbg);border-color:var(--fbd);border-radius:var(--tfrad)"></div>
<span class="t " style="left:748.0px;top:493.1px;font-size:24px;letter-spacing:-0.31px;">Editable</span>
<div class="bx" style="left:951px;top:482px;width:260px;height:43px;background:var(--fnebg);border-color:var(--fnebd);border-radius:var(--tfrad)"></div>
<span class="t " style="left:964.0px;top:493.1px;font-size:24px;letter-spacing:0.51px;">Not editable</span>
<div class="bx" style="left:303px;top:541px;width:202px;height:42px;background:var(--fbg);border-color:var(--fbd);border-radius:var(--tfrad)"></div>
<svg class="i " style="left:311px;top:547px;color:var(--fic)" width="30" height="30"><use href="#search"/></svg>
<span class="t " style="left:348.2px;top:549.9px;font-size:24px;letter-spacing:-0.78px;color:var(--ph)">Search</span>
<div class="bx" style="left:519px;top:541px;width:202px;height:42px;background:var(--fbg);border-color:var(--fbd);border-radius:var(--tfrad)"></div>
<span class="t " style="left:533.6px;top:549.9px;font-size:24px;letter-spacing:-0.07px;">text</span>
<svg class="i " style="left:681px;top:546px;color:var(--fic2)" width="32" height="32"><use href="#table"/></svg>
<div class="bx" style="left:735px;top:541px;width:202px;height:42px;background:var(--fbg);border-color:var(--fbd);border-radius:var(--tfrad)"></div>
<svg class="i " style="left:741px;top:546px;color:var(--fic)" width="32" height="32"><use href="#user"/></svg>
<span class="t " style="left:781.8px;top:549.9px;font-size:24px;letter-spacing:-0.07px;">text</span>
<svg class="i " style="left:897px;top:550px;color:var(--fic2)" width="31" height="24"><use href="#listi"/></svg>
<div class="bx" style="left:303px;top:598px;width:418px;height:43px;background:var(--fbg);border-color:var(--fbd);border-radius:var(--tfrad)"></div>
<svg class="i " style="left:307px;top:604px;color:var(--fic)" width="36" height="32"><use href="#searchdd"/></svg>
<span class="t b" style="left:598.4px;top:608.5px;font-size:24px;letter-spacing:-0.33px;color:var(--ficd)">Cc</span>
<span class="t b" style="left:640.4px;top:608.5px;font-size:24px;color:var(--ficd)">W</span>
<div class="" style="left:675px;top:603px;width:1px;height:33px;background:var(--cosep)"></div>
<span class="t b" style="left:686.6px;top:608.5px;font-size:24px;color:var(--ficd)">.</span>
<span class="t " style="left:693.6px;top:605.4px;font-size:44px;color:var(--ficd)">*</span>
<div class="bx" style="left:735px;top:598px;width:202px;height:43px;background:var(--fbg);border-color:var(--fbd);border-radius:var(--tfrad)"></div>
<span class="t " style="left:747.6px;top:608.3px;font-size:24px;letter-spacing:0.02px;">clear me</span>
<svg class="i " style="left:907px;top:612px;color:var(--xic)" width="17" height="16"><use href="#xx"/></svg>
<span class="t " style="left:300.0px;top:658.9px;font-size:72px;transform:scaleX(1.000);transform-origin:0 0;color:var(--hfg)">H00</span>
<span class="t " style="left:446.1px;top:669.0px;font-size:60px;transform:scaleX(0.981);transform-origin:0 0;color:var(--hfg)">H0</span>
<span class="t b" style="left:536.3px;top:679.2px;font-size:48px;transform:scaleX(0.884);transform-origin:0 0;color:var(--hfg)">H1</span>
<span class="t b" style="left:604.4px;top:689.3px;font-size:36px;transform:scaleX(1.014);transform-origin:0 0;color:var(--hfg)">H2</span>
<span class="t b" style="left:664.4px;top:694.4px;font-size:30px;transform:scaleX(1.009);transform-origin:0 0;color:var(--hfg)">H3</span>
<span class="t b" style="left:719.0px;top:697.5px;font-size:24px;transform:scaleX(1.022);transform-origin:0 0;color:var(--hfg)">H4</span>
<span class="t lt" style="left:806.2px;top:681.7px;font-size:45px;transform:scaleX(0.955);transform-origin:0 0;color:var(--hfg)">light</span>
<span class="t b" style="left:912.0px;top:679.2px;font-size:48px;transform:scaleX(0.969);transform-origin:0 0;color:var(--hfg)">semibold</span>
<span class="t " style="left:303.0px;top:745.7px;font-size:28px;letter-spacing:-0.17px;">large</span>
<span class="t " style="left:378.0px;top:749.1px;font-size:24px;letter-spacing:0.60px;">default</span>
<span class="t " style="left:468.0px;top:750.8px;font-size:22px;letter-spacing:0.62px;">medium</span>
<span class="t " style="left:563.0px;top:751.5px;font-size:20px;letter-spacing:-0.56px;">small</span>
<span class="t " style="left:622.0px;top:754.2px;font-size:18px;letter-spacing:0.67px;">mini</span>
<span class="t mono" style="left:716.0px;top:752.5px;font-size:22px;letter-spacing:0.02px;">monospaced</span>
<div class="ln" style="left:23px;top:786px;width:1592px;height:2px;"></div>
<div class="bx" style="left:23px;top:803px;width:240px;height:44px;background:var(--cobg);border-color:var(--cobd)"></div>
<span class="t " style="left:36.0px;top:814.3px;font-size:24px;">One Dark</span>
<svg class="i " style="left:233px;top:820px;color:var(--coar)" width="18" height="11"><use href="#tri"/></svg>
<div class="bx" style="left:283px;top:811px;width:27px;height:28px;background:var(--cbbg);border-color:var(--cbbd);border-radius:5px"></div>
<span class="t " style="left:318.0px;top:814.3px;font-size:24px;letter-spacing:1.08px;">right-to-left</span>
<div class="bx" style="left:471px;top:811px;width:28px;height:28px;background:var(--cbsbg);border-color:var(--cbsbd);border-radius:5px"></div>
<svg class="i " style="left:471px;top:811px;color:var(--cbck)" width="28" height="28"><use href="#check"/></svg>
<span class="t " style="left:506.0px;top:814.3px;font-size:24px;letter-spacing:0.32px;">enabled</span>
<span class="t " style="left:783.6px;top:814.3px;font-size:24px;letter-spacing:-0.42px;">(Java 17;  system scale factor 2.0; Segoe UI 12)</span>
<div class="bx" style="left:1465px;top:803px;width:150px;height:44px;background:var(--clbg);border-color:var(--clbd)"></div>
<span class="t b" style="left:1509.4px;top:814.3px;font-size:24px;letter-spacing:-1.15px;color:var(--clfg)">Close</span>
<span class="t " style="left:1246.4px;top:173.1px;font-size:24px;letter-spacing:-0.68px;">Themes:</span>
<svg class="i " style="left:1390px;top:171px;color:var(--ic)" width="26" height="27"><use href="#dl"/></svg>
<svg class="i " style="left:1440px;top:169px;color:var(--ghic)" width="30" height="29"><use href="#gh"/></svg>
<div class="bx" style="left:1499px;top:162px;width:116px;height:43px;background:var(--cobg);border-color:var(--cobd)"></div>
<span class="t " style="left:1512.6px;top:173.1px;font-size:24px;letter-spacing:0.66px;">all</span>
<svg class="i " style="left:1586px;top:180px;color:var(--coar)" width="17" height="10"><use href="#tri"/></svg>
<div class="bx" style="left:1245px;top:218px;width:370px;height:541px;background:var(--lbg);border-color:var(--lbd);border-radius:0;overflow:hidden"><span class="t " style="left:11.4px;top:5.5px;font-size:24px;">Gruvbox Dark Medium</span><span class="t " style="left:11.4px;top:41.5px;font-size:24px;">Gruvbox Dark Soft</span><span class="t " style="left:11.4px;top:77.5px;font-size:24px;">Hiberbee Dark</span><span class="t " style="left:11.4px;top:113.5px;font-size:24px;">High contrast</span><span class="t " style="left:11.4px;top:149.5px;font-size:24px;">Light Flat</span><span class="t " style="left:11.4px;top:185.5px;font-size:24px;">Material Design Dark</span><span class="t " style="left:11.4px;top:221.5px;font-size:24px;">Monocai</span><span class="t " style="left:11.4px;top:257.5px;font-size:24px;">Nord</span><div style="left:0;top:288px;width:346px;height:36px;background:var(--lsel)"></div><span class="t " style="left:11.4px;top:293.5px;font-size:24px;color:var(--lselfg)">One Dark</span><span class="t " style="left:11.4px;top:329.5px;font-size:24px;">Solarized Dark</span><span class="t " style="left:11.4px;top:365.5px;font-size:24px;">Solarized Light</span><span class="t " style="left:11.4px;top:401.5px;font-size:24px;">Spacegray</span><span class="t " style="left:12.4px;top:437.5px;font-size:24px;">Vuesion</span><div style="left:8px;top:484px;width:35px;height:2px;background:var(--catln)"></div><div style="left:302px;top:484px;width:35px;height:2px;background:var(--catln)"></div><span class="t cat" style="left:50.8px;top:472.1px;font-size:24px;letter-spacing:0.03px;">Material Theme UI Lite</span><span class="t " style="left:12.4px;top:505.5px;font-size:24px;">Arc Dark</span><div style="left:346px;top:0;width:19px;height:540px;background:var(--sbtrack)"></div><div style="left:346px;top:180px;width:19px;height:111px;background:var(--sbthumb)"></div></div></div>
<div class="win" style="left:0px;top:888px;--bg:#e4e6eb;--tbg:#e4e6eb;--wbd:#aeb0b4;--fg:#0a0a0a;--fgd:#a2a5aa;--mfg:#0a0a0a;--tfg:#5f6165;--tic:#6f7175;--ic:#55575b;--tsep:#c9ccd2;--tgl:#cdcdcd;--acfg:#a2a5aa;--swsel:#c6c7ca;--tabline:#c6c9cf;--acc:#22a0c2;--btnbg:#ffffff;--btnbd:#b1b8c4;--btndbg:#e4e6eb;--btndbd:#c6c8cd;--helpfg:#2d7ce0;--helpdfg:#a9acb1;--cbbg:#ffffff;--cbbd:#8e9095;--cbdbg:#e8eaee;--cbdbd:#bcbec3;--cbsbg:#1f9cbf;--cbsbd:#1f9cbf;--cbck:#ffffff;--cbsdbg:#e8eaee;--cbsdbd:#bcbec3;--cbsdck:#a9acb1;--rdot:#ffffff;--cobg:#ffffff;--cobd:#b1b8c4;--codbg:#e4e6eb;--codbd:#c6c8cd;--coar:#4f5155;--codar:#a9acb1;--cosep:#c6c8cd;--codsep:#cfd1d6;--focus:#35b0cf;--fbg:#ffffff;--fbd:#b1b8c4;--fdbg:#e4e6eb;--fdbd:#c6c8cd;--fnebg:#e4e6eb;--fic:#7f8286;--ficd:#b5b8be;--ph:#8c8f94;--lbg:#eef0f4;--lbd:#b1b8c4;--lsel:#d0d3d9;--lselfg:#0a0a0a;--catfg:#9a9da2;--catln:#9a9da2;--sbtrack:#eef0f4;--sbthumb:#cfd2d7;--sep:#c6c9cf;--clbg:#1f9cbf;--clbd:#1a8aab;--clfg:#ffffff;--caret:#0a0a0a;--uic:#5c5e62;--focus2:#52bedb;--fnebd:#b1b8c4;--eyeic:#55575b;--btnfg:#0a0a0a;--helpbg:#ffffff;--helpbd:#b1b8c4;--helpdbg:#e4e6eb;--xic:#7f8286;--ghic:#0a0a0a;--fic2:#7f8286;--hfg:#0a0a0a;--tfrad:5px;--wbw:2px;--cebg:#ffffff;--cobtn:#ffffff"><div class="frame" style="left:0px;top:2px;width:1638px;height:867px;"></div>
<div style="left:17px;top:18px;width:33px;height:32px;background:#dd5e05"></div>
<span class="t b" style="left:24px;top:20px;font-size:26px;color:#fff;-webkit-text-stroke:.8px #fff;transform:scaleX(.78);transform-origin:0 0">F</span>
<span class="t b" style="left:35.5px;top:26.5px;font-size:19px;color:#fff;-webkit-text-stroke:.8px #fff;transform:scaleX(.72);transform-origin:0 0">L</span>
<span class="t mn" style="left:81.0px;top:23.5px;font-size:24px;letter-spacing:-0.71px;">File</span>
<span class="t mn" style="left:150.0px;top:23.5px;font-size:24px;letter-spacing:-0.56px;">Edit</span>
<span class="t mn" style="left:223.2px;top:23.5px;font-size:24px;letter-spacing:-0.55px;">View</span>
<span class="t mn" style="left:306.6px;top:23.5px;font-size:24px;letter-spacing:-0.25px;">Font</span>
<span class="t mn" style="left:386.0px;top:23.5px;font-size:24px;letter-spacing:0.28px;">Options</span>
<span class="t mn" style="left:502.6px;top:23.5px;font-size:24px;letter-spacing:0.26px;">Help</span>
<span class="t ti" style="left:748.0px;top:23.5px;font-size:24px;letter-spacing:-0.16px;">FlatLaf Demo</span>
<svg class="i " style="left:1330px;top:24px;color:var(--uic)" width="34" height="23"><use href="#users"/></svg>
<div class="" style="left:1407px;top:32px;width:20px;height:3px;background:var(--tic)"></div>
<div class="" style="left:1494px;top:24px;width:21px;height:20px;border:2px solid var(--tic);border-radius:1px"></div>
<svg class="i " style="left:1581px;top:22px;color:var(--tic)" width="24" height="24"><use href="#xx"/></svg>
<svg class="i " style="left:20px;top:84px;" width="32" height="32"><use href="#back"/></svg>
<svg class="i " style="left:73px;top:84px;" width="32" height="32"><use href="#fwd"/></svg>
<div class="" style="left:120px;top:80px;width:3px;height:39px;background:var(--tsep)"></div>
<svg class="i " style="left:140px;top:84px;" width="32" height="32"><use href="#cut"/></svg>
<svg class="i " style="left:191px;top:84px;" width="32" height="32"><use href="#copy"/></svg>
<svg class="i " style="left:244px;top:84px;" width="32" height="32"><use href="#paste"/></svg>
<div class="" style="left:291px;top:80px;width:3px;height:39px;background:var(--tsep)"></div>
<svg class="i " style="left:309px;top:84px;" width="32" height="32"><use href="#refresh"/></svg>
<div class="" style="left:357px;top:80px;width:3px;height:39px;background:var(--tsep)"></div>
<div class="" style="left:369px;top:78px;width:44px;height:44px;background:var(--tgl);border-radius:6px"></div>
<svg class="i " style="left:375px;top:84px;color:var(--eyeic)" width="32" height="32"><use href="#eye"/></svg>
<span class="t " style="left:1119.6px;top:89.5px;font-size:24px;letter-spacing:-0.02px;color:var(--acfg)">Accent color:</span>
<div class="" style="left:1267px;top:79px;width:44px;height:43px;background:var(--swsel);border-radius:6px"></div>
<div class="" style="left:1275px;top:86px;width:28px;height:28px;background:#a5c5e0;border-radius:5px"></div>
<div class="" style="left:1327px;top:86px;width:28px;height:28px;background:#99c7ff;border-radius:5px"></div>
<div class="" style="left:1379px;top:86px;width:28px;height:28px;background:#e4bdfb;border-radius:5px"></div>
<div class="" style="left:1431px;top:86px;width:28px;height:28px;background:#ffa9a9;border-radius:5px"></div>
<div class="" style="left:1483px;top:86px;width:28px;height:28px;background:#ffd294;border-radius:5px"></div>
<div class="" style="left:1535px;top:86px;width:28px;height:28px;background:#ffe999;border-radius:5px"></div>
<div class="" style="left:1587px;top:86px;width:28px;height:28px;background:#a9e5a9;border-radius:5px"></div>
<span class="t " style="left:46.0px;top:176.7px;font-size:24px;letter-spacing:-0.23px;">Basic Components</span>
<span class="t " style="left:293.0px;top:176.7px;font-size:24px;letter-spacing:0.26px;">More Components</span>
<span class="t " style="left:542.0px;top:176.7px;font-size:24px;letter-spacing:0.04px;">Data Components</span>
<span class="t " style="left:785.0px;top:176.7px;font-size:24px;letter-spacing:-0.57px;">Tabs</span>
<span class="t " style="left:882.0px;top:176.7px;font-size:24px;letter-spacing:0.09px;">Option Pane</span>
<span class="t " style="left:1064.0px;top:176.7px;font-size:24px;letter-spacing:-1.20px;">Extras</span>
<div class="" style="left:23px;top:220px;width:1199px;height:2px;background:var(--tabline)"></div>
<div class="" style="left:23px;top:216px;width:246px;height:6px;background:var(--acc)"></div>
<span class="t " style="left:45.0px;top:269.1px;font-size:24px;letter-spacing:-0.06px;">JButton:</span>
<span class="t " style="left:45.0px;top:324.3px;font-size:24px;letter-spacing:-1.05px;">JCheckBox</span>
<span class="t " style="left:45.0px;top:378.3px;font-size:24px;letter-spacing:-0.26px;">JRadioButton:</span>
<span class="t " style="left:45.0px;top:434.9px;font-size:24px;letter-spacing:-0.52px;">JComboBox:</span>
<span class="t " style="left:45.0px;top:492.1px;font-size:24px;letter-spacing:-0.18px;">JSpinner / JTextField:</span>
<span class="t " style="left:44.0px;top:551.3px;font-size:24px;letter-spacing:0.21px;">Leading/trailing icons:</span>
<span class="t " style="left:44.0px;top:609.1px;font-size:24px;letter-spacing:0.24px;">Leading/trailing comp.:</span>
<span class="t " style="left:45.0px;top:697.9px;font-size:24px;letter-spacing:0.18px;">Typography / Fonts:</span>
<div class="bx" style="left:303px;top:259px;width:146px;height:42px;background:var(--btnbg);border-color:var(--btnbd)"></div>
<span class="t " style="left:332.6px;top:267.9px;font-size:24px;letter-spacing:-0.46px;color:var(--btnfg)">Enabled</span>
<div class="bx" style="left:519px;top:259px;width:152px;height:42px;background:var(--btndbg);border-color:var(--btndbd)"></div>
<span class="t dis" style="left:548.6px;top:267.9px;font-size:24px;letter-spacing:-0.06px;">Disabled</span>
<div class="bx" style="left:735px;top:259px;width:144px;height:42px;background:var(--btnbg);border-color:var(--btnbd);border-radius:0"></div>
<span class="t " style="left:770.4px;top:267.9px;font-size:24px;letter-spacing:-0.57px;color:var(--btnfg)">Square</span>
<div class="bx" style="left:951px;top:259px;width:144px;height:42px;background:var(--btnbg);border-color:var(--btnbd);border-radius:22px"></div>
<span class="t " style="left:988.2px;top:267.9px;font-size:24px;letter-spacing:0.26px;color:var(--btnfg)">Round</span>
<div class="bx" style="left:1110px;top:259px;width:42px;height:43px;background:var(--helpbg);border-color:var(--helpbd);border-radius:50%"></div>
<span class="t " style="left:1121.4px;top:265.1px;font-size:33px;color:var(--helpfg)">?</span>
<div class="bx" style="left:1168px;top:259px;width:42px;height:43px;background:var(--helpdbg);border-color:var(--btndbd);border-radius:50%"></div>
<span class="t " style="left:1179.4px;top:265.1px;font-size:33px;color:var(--helpdfg)">?</span>
<div class="bx" style="left:309px;top:322px;width:27px;height:27px;background:var(--cbbg);border-color:var(--cbbd);border-radius:5px"></div>
<span class="t " style="left:344.8px;top:324.3px;font-size:24px;letter-spacing:-0.46px;">Enabled</span>
<div class="bx" style="left:525px;top:322px;width:27px;height:27px;background:var(--cbdbg);border-color:var(--cbdbd);border-radius:5px"></div>
<span class="t dis" style="left:560.8px;top:324.3px;font-size:24px;letter-spacing:-0.12px;">Disabled</span>
<div class="bx" style="left:741px;top:322px;width:28px;height:27px;background:var(--cbsbg);border-color:var(--cbsbd);border-radius:5px"></div>
<svg class="i " style="left:741px;top:322px;color:var(--cbck)" width="28" height="27"><use href="#check"/></svg>
<span class="t " style="left:776.4px;top:324.3px;font-size:24px;letter-spacing:-0.15px;">Selected</span>
<div class="bx" style="left:957px;top:322px;width:28px;height:27px;background:var(--cbsdbg);border-color:var(--cbsdbd);border-radius:5px"></div>
<svg class="i " style="left:957px;top:322px;color:var(--cbsdck)" width="28" height="27"><use href="#check"/></svg>
<span class="t dis" style="left:993.0px;top:324.3px;font-size:24px;letter-spacing:-0.12px;">Selected disabled</span>
<div class="bx" style="left:308px;top:376px;width:29px;height:29px;background:var(--cbbg);border-color:var(--cbbd);border-radius:50%"></div>
<span class="t " style="left:344.8px;top:378.3px;font-size:24px;letter-spacing:-0.46px;">Enabled</span>
<div class="bx" style="left:524px;top:376px;width:29px;height:29px;background:var(--cbdbg);border-color:var(--cbdbd);border-radius:50%"></div>
<span class="t dis" style="left:560.8px;top:378.3px;font-size:24px;letter-spacing:-0.12px;">Disabled</span>
<div class="bx" style="left:740px;top:376px;width:29px;height:29px;background:var(--cbsbg);border-color:var(--cbsbd);border-radius:50%"></div>
<div class="" style="left:749px;top:385px;width:11px;height:11px;background:var(--rdot);border-radius:50%"></div>
<span class="t " style="left:776.4px;top:378.3px;font-size:24px;letter-spacing:-0.15px;">Selected</span>
<div class="bx" style="left:956px;top:376px;width:29px;height:29px;background:var(--cbsdbg);border-color:var(--cbsdbd);border-radius:50%"></div>
<div class="" style="left:965px;top:385px;width:11px;height:11px;background:var(--cbsdck);border-radius:50%"></div>
<span class="t dis" style="left:993.0px;top:378.3px;font-size:24px;letter-spacing:-0.12px;">Selected disabled</span>
<div class="bx" style="left:303px;top:424px;width:202px;height:43px;background:var(--cebg);border-color:var(--focus);border-width:2px;box-shadow:0 0 0 4.4px var(--focus2);border-radius:7.6px"></div>
<div class="" style="left:464px;top:426px;width:2px;height:39px;background:var(--cosep)"></div>
<svg class="i " style="left:475px;top:442px;color:var(--coar)" width="18" height="10"><use href="#tri"/></svg>
<span class="t " style="left:316.8px;top:433.9px;font-size:24px;letter-spacing:-0.31px;">Editable</span>
<div class="" style="left:401px;top:430px;width:2px;height:31px;background:var(--caret)"></div>
<div class="bx" style="left:519px;top:424px;width:202px;height:43px;background:var(--codbg);border-color:var(--codbd)"></div>
<div class="" style="left:680px;top:426px;width:2px;height:39px;background:var(--codsep)"></div>
<svg class="i " style="left:691px;top:442px;color:var(--codar)" width="18" height="10"><use href="#tri"/></svg>
<span class="t dis" style="left:532.6px;top:433.9px;font-size:24px;letter-spacing:-0.09px;">Disabled</span>
<div class="bx" style="left:735px;top:424px;width:202px;height:43px;background:var(--cobg);border-color:var(--cobd)"></div>
<svg class="i " style="left:907px;top:442px;color:var(--coar)" width="17" height="10"><use href="#tri"/></svg>
<span class="t " style="left:748.0px;top:433.9px;font-size:24px;letter-spacing:0.51px;">Not editable</span>
<div class="bx" style="left:951px;top:424px;width:260px;height:43px;background:var(--codbg);border-color:var(--codbd)"></div>
<svg class="i " style="left:1181px;top:442px;color:var(--codar)" width="18" height="10"><use href="#tri"/></svg>
<span class="t dis" style="left:964.0px;top:433.9px;font-size:24px;letter-spacing:0.12px;">Not editable dis...</span>
<div class="bx" style="left:303px;top:482px;width:202px;height:43px;background:var(--fbg);border-color:var(--fbd)"></div>
<div class="" style="left:464px;top:484px;width:2px;height:39px;background:var(--cosep)"></div>
<svg class="i " style="left:475px;top:492px;color:var(--coar)" width="18" height="9"><use href="#triup"/></svg>
<svg class="i " style="left:475px;top:505px;color:var(--coar)" width="18" height="10"><use href="#tri"/></svg>
<span class="t " style="left:433.6px;top:493.1px;font-size:24px;">0</span>
<div class="bx" style="left:519px;top:482px;width:202px;height:43px;background:var(--fdbg);border-color:var(--fdbd)"></div>
<div class="" style="left:680px;top:484px;width:2px;height:39px;background:var(--codsep)"></div>
<svg class="i " style="left:691px;top:492px;color:var(--codar)" width="18" height="9"><use href="#triup"/></svg>
<svg class="i " style="left:691px;top:505px;color:var(--codar)" width="18" height="10"><use href="#tri"/></svg>
<span class="t dis" style="left:649.2px;top:493.1px;font-size:24px;">0</span>
<div class="bx" style="left:735px;top:482px;width:202px;height:43px;background:var(--fbg);border-color:var(--fbd);border-radius:var(--tfrad)"></div>
<span class="t " style="left:748.0px;top:493.1px;font-size:24px;letter-spacing:-0.31px;">Editable</span>
<div class="bx" style="left:951px;top:482px;width:260px;height:43px;background:var(--fnebg);border-color:var(--fnebd);border-radius:var(--tfrad)"></div>
<span class="t " style="left:964.0px;top:493.1px;font-size:24px;letter-spacing:0.51px;">Not editable</span>
<div class="bx" style="left:303px;top:541px;width:202px;height:42px;background:var(--fbg);border-color:var(--fbd);border-radius:var(--tfrad)"></div>
<svg class="i " style="left:311px;top:547px;color:var(--fic)" width="30" height="30"><use href="#search"/></svg>
<span class="t " style="left:348.2px;top:549.9px;font-size:24px;letter-spacing:-0.78px;color:var(--ph)">Search</span>
<div class="bx" style="left:519px;top:541px;width:202px;height:42px;background:var(--fbg);border-color:var(--fbd);border-radius:var(--tfrad)"></div>
<span class="t " style="left:533.6px;top:549.9px;font-size:24px;letter-spacing:-0.07px;">text</span>
<svg class="i " style="left:681px;top:546px;color:var(--fic2)" width="32" height="32"><use href="#table"/></svg>
<div class="bx" style="left:735px;top:541px;width:202px;height:42px;background:var(--fbg);border-color:var(--fbd);border-radius:var(--tfrad)"></div>
<svg class="i " style="left:741px;top:546px;color:var(--fic)" width="32" height="32"><use href="#user"/></svg>
<span class="t " style="left:781.8px;top:549.9px;font-size:24px;letter-spacing:-0.07px;">text</span>
<svg class="i " style="left:897px;top:550px;color:var(--fic2)" width="31" height="24"><use href="#listi"/></svg>
<div class="bx" style="left:303px;top:598px;width:418px;height:43px;background:var(--fbg);border-color:var(--fbd);border-radius:var(--tfrad)"></div>
<svg class="i " style="left:307px;top:604px;color:var(--fic)" width="36" height="32"><use href="#searchdd"/></svg>
<span class="t b" style="left:598.4px;top:608.5px;font-size:24px;letter-spacing:-0.33px;color:var(--ficd)">Cc</span>
<span class="t b" style="left:640.4px;top:608.5px;font-size:24px;color:var(--ficd)">W</span>
<div class="" style="left:675px;top:603px;width:1px;height:33px;background:var(--cosep)"></div>
<span class="t b" style="left:686.6px;top:608.5px;font-size:24px;color:var(--ficd)">.</span>
<span class="t " style="left:693.6px;top:605.4px;font-size:44px;color:var(--ficd)">*</span>
<div class="bx" style="left:735px;top:598px;width:202px;height:43px;background:var(--fbg);border-color:var(--fbd);border-radius:var(--tfrad)"></div>
<span class="t " style="left:747.6px;top:608.3px;font-size:24px;letter-spacing:0.02px;">clear me</span>
<svg class="i " style="left:907px;top:612px;color:var(--xic)" width="17" height="16"><use href="#xx"/></svg>
<span class="t " style="left:300.0px;top:658.9px;font-size:72px;transform:scaleX(1.000);transform-origin:0 0;color:var(--hfg)">H00</span>
<span class="t " style="left:446.1px;top:669.0px;font-size:60px;transform:scaleX(0.981);transform-origin:0 0;color:var(--hfg)">H0</span>
<span class="t b" style="left:536.3px;top:679.2px;font-size:48px;transform:scaleX(0.884);transform-origin:0 0;color:var(--hfg)">H1</span>
<span class="t b" style="left:604.4px;top:689.3px;font-size:36px;transform:scaleX(1.014);transform-origin:0 0;color:var(--hfg)">H2</span>
<span class="t b" style="left:664.4px;top:694.4px;font-size:30px;transform:scaleX(1.009);transform-origin:0 0;color:var(--hfg)">H3</span>
<span class="t b" style="left:719.0px;top:697.5px;font-size:24px;transform:scaleX(1.022);transform-origin:0 0;color:var(--hfg)">H4</span>
<span class="t lt" style="left:806.2px;top:681.7px;font-size:45px;transform:scaleX(0.955);transform-origin:0 0;color:var(--hfg)">light</span>
<span class="t b" style="left:912.0px;top:679.2px;font-size:48px;transform:scaleX(0.969);transform-origin:0 0;color:var(--hfg)">semibold</span>
<span class="t " style="left:303.0px;top:745.7px;font-size:28px;letter-spacing:-0.17px;">large</span>
<span class="t " style="left:378.0px;top:749.1px;font-size:24px;letter-spacing:0.60px;">default</span>
<span class="t " style="left:468.0px;top:750.8px;font-size:22px;letter-spacing:0.62px;">medium</span>
<span class="t " style="left:563.0px;top:751.5px;font-size:20px;letter-spacing:-0.56px;">small</span>
<span class="t " style="left:622.0px;top:754.2px;font-size:18px;letter-spacing:0.67px;">mini</span>
<span class="t mono" style="left:716.0px;top:752.5px;font-size:22px;letter-spacing:0.02px;">monospaced</span>
<div class="ln" style="left:23px;top:786px;width:1592px;height:2px;"></div>
<div class="bx" style="left:23px;top:803px;width:240px;height:44px;background:var(--cobg);border-color:var(--cobd)"></div>
<span class="t " style="left:36.0px;top:814.3px;font-size:24px;">Cyan light</span>
<svg class="i " style="left:233px;top:820px;color:var(--coar)" width="18" height="11"><use href="#tri"/></svg>
<div class="bx" style="left:283px;top:811px;width:27px;height:28px;background:var(--cbbg);border-color:var(--cbbd);border-radius:5px"></div>
<span class="t " style="left:318.0px;top:814.3px;font-size:24px;letter-spacing:1.08px;">right-to-left</span>
<div class="bx" style="left:471px;top:811px;width:28px;height:28px;background:var(--cbsbg);border-color:var(--cbsbd);border-radius:5px"></div>
<svg class="i " style="left:471px;top:811px;color:var(--cbck)" width="28" height="28"><use href="#check"/></svg>
<span class="t " style="left:506.0px;top:814.3px;font-size:24px;letter-spacing:0.32px;">enabled</span>
<span class="t " style="left:783.6px;top:814.3px;font-size:24px;letter-spacing:-0.42px;">(Java 17;  system scale factor 2.0; Segoe UI 12)</span>
<div class="bx" style="left:1465px;top:803px;width:150px;height:44px;background:var(--clbg);border-color:var(--clbd)"></div>
<span class="t b" style="left:1509.4px;top:814.3px;font-size:24px;letter-spacing:-1.15px;color:var(--clfg)">Close</span>
<span class="t " style="left:1246.4px;top:173.1px;font-size:24px;letter-spacing:-0.68px;">Themes:</span>
<svg class="i " style="left:1390px;top:171px;color:var(--ic)" width="26" height="27"><use href="#dl"/></svg>
<svg class="i " style="left:1440px;top:169px;color:var(--ghic)" width="30" height="29"><use href="#gh"/></svg>
<div class="bx" style="left:1499px;top:162px;width:116px;height:43px;background:var(--cobg);border-color:var(--cobd)"></div>
<span class="t " style="left:1512.6px;top:173.1px;font-size:24px;letter-spacing:0.66px;">all</span>
<svg class="i " style="left:1586px;top:180px;color:var(--coar)" width="17" height="10"><use href="#tri"/></svg>
<div class="bx" style="left:1245px;top:218px;width:370px;height:541px;background:var(--lbg);border-color:var(--lbd);border-radius:0;overflow:hidden"><div style="left:8px;top:16px;width:86px;height:2px;background:var(--catln)"></div><div style="left:252px;top:16px;width:86px;height:2px;background:var(--catln)"></div><span class="t cat" style="left:101.4px;top:4.1px;font-size:24px;letter-spacing:-0.36px;">Core Themes</span><span class="t " style="left:11.4px;top:37.5px;font-size:24px;">Flat Light</span><span class="t " style="left:11.4px;top:73.5px;font-size:24px;">Flat Dark</span><span class="t " style="left:11.4px;top:109.5px;font-size:24px;">Flat IntelliJ</span><span class="t " style="left:11.4px;top:145.5px;font-size:24px;">Flat Darcula</span><div style="left:8px;top:192px;width:65px;height:2px;background:var(--catln)"></div><div style="left:273px;top:192px;width:65px;height:2px;background:var(--catln)"></div><span class="t cat" style="left:80.5px;top:180.1px;font-size:24px;letter-spacing:0.06px;">Current Directory</span><span class="t " style="left:11.4px;top:213.5px;font-size:24px;">DemoLaf</span><div style="left:8px;top:260px;width:69px;height:2px;background:var(--catln)"></div><div style="left:268px;top:260px;width:69px;height:2px;background:var(--catln)"></div><span class="t cat" style="left:83.8px;top:248.1px;font-size:24px;letter-spacing:1.04px;">IntelliJ Themes</span><span class="t " style="left:12.4px;top:281.5px;font-size:24px;">Arc</span><span class="t " style="left:12.4px;top:317.5px;font-size:24px;">Arc - Orange</span><span class="t " style="left:12.4px;top:353.5px;font-size:24px;">Arc Dark</span><span class="t " style="left:12.4px;top:389.5px;font-size:24px;">Arc Dark - Orange</span><span class="t " style="left:11.4px;top:425.5px;font-size:24px;">Carbon</span><span class="t " style="left:11.4px;top:461.5px;font-size:24px;">Cobalt 2</span><div style="left:0;top:492px;width:346px;height:36px;background:var(--lsel)"></div><span class="t " style="left:11.4px;top:497.5px;font-size:24px;color:var(--lselfg)">Cyan light</span><span class="t " style="left:11.4px;top:533.5px;font-size:24px;">Dark Flat</span><div style="left:346px;top:0;width:19px;height:540px;background:var(--sbtrack)"></div><div style="left:346px;top:0px;width:19px;height:111px;background:var(--sbthumb)"></div></div></div>
<div class="win" style="left:1658px;top:888px;--bg:#172030;--tbg:#172030;--wbd:transparent;--fg:#b4bcc8;--fgd:#7b8594;--mfg:#b4bcc8;--tfg:#8993a2;--tic:#c3c9d2;--ic:#d0d5dc;--tsep:#212d42;--tgl:#0f6b7d;--acfg:#8993a2;--swsel:#0f6b7d;--tabline:#27344a;--acc:#14798d;--btnbg:#07485a;--btnbd:#39a6b8;--btndbg:#172030;--btndbd:#6d7785;--helpfg:#e0e5ea;--helpdfg:#9aa3b0;--cbbg:#1b2638;--cbbd:#4e5a6e;--cbdbg:#172030;--cbdbd:#8993a2;--cbsbg:#1b2638;--cbsbd:#5e6a7e;--cbck:#f0f2f5;--cbsdbg:#172030;--cbsdbd:#8993a2;--cbsdck:#8993a2;--rdot:#f0f2f5;--cobg:#1d2a3e;--cobd:#1d2a3e;--codbg:#172030;--codbd:#7d8795;--coar:#c3c9d2;--codar:#9aa3b0;--cosep:#2c3a50;--codsep:#7d8795;--focus:#139aaa;--fbg:#172030;--fbd:#27344a;--fdbg:#172030;--fdbd:#7d8795;--fnebg:#172030;--fic:#9aa3b0;--ficd:#7f7a9f;--ph:#8993a2;--lbg:#172030;--lbd:#27344a;--lsel:#1f2c42;--lselfg:#b4bcc8;--catfg:#8993a2;--catln:#8993a2;--sbtrack:#172030;--sbthumb:#273a5c;--sep:#27344a;--clbg:#0f6b80;--clbd:#0f6b80;--clfg:#ffffff;--caret:#e0e5ea;--wbw:1px;--uic:#d3d6db;--btnfg:#dfe4ea;--focus2:#139aaa;--fnebd:#27344a;--fic2:#c3c9d2;--xic:#3a465a;--ghic:#ffffff;--eyeic:#e8f4f7;--hfg:#ccd2da;--helpbg:#07485a;--helpbd:#39a6b8;--helpdbg:#172030;--tfrad:5px;--cebg:#172030;--cobtn:#172030"><div class="frame" style="left:0px;top:2px;width:1638px;height:867px;"></div>
<div style="left:17px;top:18px;width:33px;height:32px;background:#dd5e05"></div>
<span class="t b" style="left:24px;top:20px;font-size:26px;color:#fff;-webkit-text-stroke:.8px #fff;transform:scaleX(.78);transform-origin:0 0">F</span>
<span class="t b" style="left:35.5px;top:26.5px;font-size:19px;color:#fff;-webkit-text-stroke:.8px #fff;transform:scaleX(.72);transform-origin:0 0">L</span>
<span class="t mn" style="left:81.0px;top:23.5px;font-size:24px;letter-spacing:-0.71px;">File</span>
<span class="t mn" style="left:150.0px;top:23.5px;font-size:24px;letter-spacing:-0.56px;">Edit</span>
<span class="t mn" style="left:223.2px;top:23.5px;font-size:24px;letter-spacing:-0.55px;">View</span>
<span class="t mn" style="left:306.6px;top:23.5px;font-size:24px;letter-spacing:-0.25px;">Font</span>
<span class="t mn" style="left:386.0px;top:23.5px;font-size:24px;letter-spacing:0.28px;">Options</span>
<span class="t mn" style="left:502.6px;top:23.5px;font-size:24px;letter-spacing:0.26px;">Help</span>
<span class="t ti" style="left:748.0px;top:23.5px;font-size:24px;letter-spacing:-0.16px;">FlatLaf Demo</span>
<svg class="i " style="left:1330px;top:24px;color:var(--uic)" width="34" height="23"><use href="#users"/></svg>
<div class="" style="left:1407px;top:32px;width:20px;height:3px;background:var(--tic)"></div>
<div class="" style="left:1494px;top:24px;width:21px;height:20px;border:2px solid var(--tic);border-radius:1px"></div>
<svg class="i " style="left:1581px;top:22px;color:var(--tic)" width="24" height="24"><use href="#xx"/></svg>
<svg class="i " style="left:20px;top:84px;" width="32" height="32"><use href="#back"/></svg>
<svg class="i " style="left:73px;top:84px;" width="32" height="32"><use href="#fwd"/></svg>
<div class="" style="left:120px;top:80px;width:3px;height:39px;background:var(--tsep)"></div>
<svg class="i " style="left:140px;top:84px;" width="32" height="32"><use href="#cut"/></svg>
<svg class="i " style="left:191px;top:84px;" width="32" height="32"><use href="#copy"/></svg>
<svg class="i " style="left:244px;top:84px;" width="32" height="32"><use href="#paste"/></svg>
<div class="" style="left:291px;top:80px;width:3px;height:39px;background:var(--tsep)"></div>
<svg class="i " style="left:309px;top:84px;" width="32" height="32"><use href="#refresh"/></svg>
<div class="" style="left:357px;top:80px;width:3px;height:39px;background:var(--tsep)"></div>
<div class="" style="left:369px;top:78px;width:44px;height:44px;background:var(--tgl);border-radius:6px"></div>
<svg class="i " style="left:375px;top:84px;color:var(--eyeic)" width="32" height="32"><use href="#eye"/></svg>
<span class="t " style="left:1119.6px;top:89.5px;font-size:24px;letter-spacing:-0.02px;color:var(--acfg)">Accent color:</span>
<div class="" style="left:1267px;top:79px;width:44px;height:43px;background:var(--swsel);border-radius:6px"></div>
<div class="" style="left:1275px;top:86px;width:28px;height:28px;background:#2c3b5e;border-radius:5px"></div>
<div class="" style="left:1327px;top:86px;width:28px;height:28px;background:#0b4c90;border-radius:5px"></div>
<div class="" style="left:1379px;top:86px;width:28px;height:28px;background:#6a3289;border-radius:5px"></div>
<div class="" style="left:1431px;top:86px;width:28px;height:28px;background:#8a2a25;border-radius:5px"></div>
<div class="" style="left:1483px;top:86px;width:28px;height:28px;background:#8a560f;border-radius:5px"></div>
<div class="" style="left:1535px;top:86px;width:28px;height:28px;background:#8a6f0a;border-radius:5px"></div>
<div class="" style="left:1587px;top:86px;width:28px;height:28px;background:#1e7a33;border-radius:5px"></div>
<span class="t " style="left:46.0px;top:176.7px;font-size:24px;letter-spacing:-0.23px;">Basic Components</span>
<span class="t " style="left:293.0px;top:176.7px;font-size:24px;letter-spacing:0.26px;">More Components</span>
<span class="t " style="left:542.0px;top:176.7px;font-size:24px;letter-spacing:0.04px;">Data Components</span>
<span class="t " style="left:785.0px;top:176.7px;font-size:24px;letter-spacing:-0.57px;">Tabs</span>
<span class="t " style="left:882.0px;top:176.7px;font-size:24px;letter-spacing:0.09px;">Option Pane</span>
<span class="t " style="left:1064.0px;top:176.7px;font-size:24px;letter-spacing:-1.20px;">Extras</span>
<div class="" style="left:23px;top:220px;width:1199px;height:2px;background:var(--tabline)"></div>
<div class="" style="left:23px;top:216px;width:246px;height:6px;background:var(--acc)"></div>
<span class="t " style="left:45.0px;top:269.1px;font-size:24px;letter-spacing:-0.06px;">JButton:</span>
<span class="t " style="left:45.0px;top:324.3px;font-size:24px;letter-spacing:-1.05px;">JCheckBox</span>
<span class="t " style="left:45.0px;top:378.3px;font-size:24px;letter-spacing:-0.26px;">JRadioButton:</span>
<span class="t " style="left:45.0px;top:434.9px;font-size:24px;letter-spacing:-0.52px;">JComboBox:</span>
<span class="t " style="left:45.0px;top:492.1px;font-size:24px;letter-spacing:-0.18px;">JSpinner / JTextField:</span>
<span class="t " style="left:44.0px;top:551.3px;font-size:24px;letter-spacing:0.21px;">Leading/trailing icons:</span>
<span class="t " style="left:44.0px;top:609.1px;font-size:24px;letter-spacing:0.24px;">Leading/trailing comp.:</span>
<span class="t " style="left:45.0px;top:697.9px;font-size:24px;letter-spacing:0.18px;">Typography / Fonts:</span>
<div class="bx" style="left:303px;top:259px;width:146px;height:42px;background:var(--btnbg);border-color:var(--btnbd)"></div>
<span class="t " style="left:332.6px;top:267.9px;font-size:24px;letter-spacing:-0.46px;color:var(--btnfg)">Enabled</span>
<div class="bx" style="left:519px;top:259px;width:152px;height:42px;background:var(--btndbg);border-color:var(--btndbd)"></div>
<span class="t dis" style="left:548.6px;top:267.9px;font-size:24px;letter-spacing:-0.06px;">Disabled</span>
<div class="bx" style="left:735px;top:259px;width:144px;height:42px;background:var(--btnbg);border-color:var(--btnbd);border-radius:0"></div>
<span class="t " style="left:770.4px;top:267.9px;font-size:24px;letter-spacing:-0.57px;color:var(--btnfg)">Square</span>
<div class="bx" style="left:951px;top:259px;width:144px;height:42px;background:var(--btnbg);border-color:var(--btnbd);border-radius:22px"></div>
<span class="t " style="left:988.2px;top:267.9px;font-size:24px;letter-spacing:0.26px;color:var(--btnfg)">Round</span>
<div class="bx" style="left:1110px;top:259px;width:42px;height:43px;background:var(--helpbg);border-color:var(--helpbd);border-radius:50%"></div>
<span class="t " style="left:1121.4px;top:265.1px;font-size:33px;color:var(--helpfg)">?</span>
<div class="bx" style="left:1168px;top:259px;width:42px;height:43px;background:var(--helpdbg);border-color:var(--btndbd);border-radius:50%"></div>
<span class="t " style="left:1179.4px;top:265.1px;font-size:33px;color:var(--helpdfg)">?</span>
<div class="bx" style="left:309px;top:322px;width:27px;height:27px;background:var(--cbbg);border-color:var(--cbbd);border-radius:5px"></div>
<span class="t " style="left:344.8px;top:324.3px;font-size:24px;letter-spacing:-0.46px;">Enabled</span>
<div class="bx" style="left:525px;top:322px;width:27px;height:27px;background:var(--cbdbg);border-color:var(--cbdbd);border-radius:5px"></div>
<span class="t dis" style="left:560.8px;top:324.3px;font-size:24px;letter-spacing:-0.12px;">Disabled</span>
<div class="bx" style="left:741px;top:322px;width:28px;height:27px;background:var(--cbsbg);border-color:var(--cbsbd);border-radius:5px"></div>
<svg class="i " style="left:741px;top:322px;color:var(--cbck)" width="28" height="27"><use href="#check"/></svg>
<span class="t " style="left:776.4px;top:324.3px;font-size:24px;letter-spacing:-0.15px;">Selected</span>
<div class="bx" style="left:957px;top:322px;width:28px;height:27px;background:var(--cbsdbg);border-color:var(--cbsdbd);border-radius:5px"></div>
<svg class="i " style="left:957px;top:322px;color:var(--cbsdck)" width="28" height="27"><use href="#check"/></svg>
<span class="t dis" style="left:993.0px;top:324.3px;font-size:24px;letter-spacing:-0.12px;">Selected disabled</span>
<div class="bx" style="left:308px;top:376px;width:29px;height:29px;background:var(--cbbg);border-color:var(--cbbd);border-radius:50%"></div>
<span class="t " style="left:344.8px;top:378.3px;font-size:24px;letter-spacing:-0.46px;">Enabled</span>
<div class="bx" style="left:524px;top:376px;width:29px;height:29px;background:var(--cbdbg);border-color:var(--cbdbd);border-radius:50%"></div>
<span class="t dis" style="left:560.8px;top:378.3px;font-size:24px;letter-spacing:-0.12px;">Disabled</span>
<div class="bx" style="left:740px;top:376px;width:29px;height:29px;background:var(--cbsbg);border-color:var(--cbsbd);border-radius:50%"></div>
<div class="" style="left:749px;top:385px;width:11px;height:11px;background:var(--rdot);border-radius:50%"></div>
<span class="t " style="left:776.4px;top:378.3px;font-size:24px;letter-spacing:-0.15px;">Selected</span>
<div class="bx" style="left:956px;top:376px;width:29px;height:29px;background:var(--cbsdbg);border-color:var(--cbsdbd);border-radius:50%"></div>
<div class="" style="left:965px;top:385px;width:11px;height:11px;background:var(--cbsdck);border-radius:50%"></div>
<span class="t dis" style="left:993.0px;top:378.3px;font-size:24px;letter-spacing:-0.12px;">Selected disabled</span>
<div class="bx" style="left:303px;top:424px;width:202px;height:43px;background:var(--cebg);border-color:var(--focus);border-width:2px;box-shadow:0 0 0 4.4px var(--focus2);border-radius:7.6px"></div>
<div class="" style="left:464px;top:426px;width:2px;height:39px;background:var(--cosep)"></div>
<svg class="i " style="left:475px;top:442px;color:var(--coar)" width="18" height="10"><use href="#tri"/></svg>
<span class="t " style="left:316.8px;top:433.9px;font-size:24px;letter-spacing:-0.31px;">Editable</span>
<div class="" style="left:401px;top:430px;width:2px;height:31px;background:var(--caret)"></div>
<div class="bx" style="left:519px;top:424px;width:202px;height:43px;background:var(--codbg);border-color:var(--codbd)"></div>
<div class="" style="left:680px;top:426px;width:2px;height:39px;background:var(--codsep)"></div>
<svg class="i " style="left:691px;top:442px;color:var(--codar)" width="18" height="10"><use href="#tri"/></svg>
<span class="t dis" style="left:532.6px;top:433.9px;font-size:24px;letter-spacing:-0.09px;">Disabled</span>
<div class="bx" style="left:735px;top:424px;width:202px;height:43px;background:var(--cobg);border-color:var(--cobd)"></div>
<svg class="i " style="left:907px;top:442px;color:var(--coar)" width="17" height="10"><use href="#tri"/></svg>
<span class="t " style="left:748.0px;top:433.9px;font-size:24px;letter-spacing:0.51px;">Not editable</span>
<div class="bx" style="left:951px;top:424px;width:260px;height:43px;background:var(--codbg);border-color:var(--codbd)"></div>
<svg class="i " style="left:1181px;top:442px;color:var(--codar)" width="18" height="10"><use href="#tri"/></svg>
<span class="t dis" style="left:964.0px;top:433.9px;font-size:24px;letter-spacing:0.12px;">Not editable dis...</span>
<div class="bx" style="left:303px;top:482px;width:202px;height:43px;background:var(--fbg);border-color:var(--fbd)"></div>
<div class="" style="left:464px;top:484px;width:2px;height:39px;background:var(--cosep)"></div>
<svg class="i " style="left:475px;top:492px;color:var(--coar)" width="18" height="9"><use href="#triup"/></svg>
<svg class="i " style="left:475px;top:505px;color:var(--coar)" width="18" height="10"><use href="#tri"/></svg>
<span class="t " style="left:433.6px;top:493.1px;font-size:24px;">0</span>
<div class="bx" style="left:519px;top:482px;width:202px;height:43px;background:var(--fdbg);border-color:var(--fdbd)"></div>
<div class="" style="left:680px;top:484px;width:2px;height:39px;background:var(--codsep)"></div>
<svg class="i " style="left:691px;top:492px;color:var(--codar)" width="18" height="9"><use href="#triup"/></svg>
<svg class="i " style="left:691px;top:505px;color:var(--codar)" width="18" height="10"><use href="#tri"/></svg>
<span class="t dis" style="left:649.2px;top:493.1px;font-size:24px;">0</span>
<div class="bx" style="left:735px;top:482px;width:202px;height:43px;background:var(--fbg);border-color:var(--fbd);border-radius:var(--tfrad)"></div>
<span class="t " style="left:748.0px;top:493.1px;font-size:24px;letter-spacing:-0.31px;">Editable</span>
<div class="bx" style="left:951px;top:482px;width:260px;height:43px;background:var(--fnebg);border-color:var(--fnebd);border-radius:var(--tfrad)"></div>
<span class="t " style="left:964.0px;top:493.1px;font-size:24px;letter-spacing:0.51px;">Not editable</span>
<div class="bx" style="left:303px;top:541px;width:202px;height:42px;background:var(--fbg);border-color:var(--fbd);border-radius:var(--tfrad)"></div>
<svg class="i " style="left:311px;top:547px;color:var(--fic)" width="30" height="30"><use href="#search"/></svg>
<span class="t " style="left:348.2px;top:549.9px;font-size:24px;letter-spacing:-0.78px;color:var(--ph)">Search</span>
<div class="bx" style="left:519px;top:541px;width:202px;height:42px;background:var(--fbg);border-color:var(--fbd);border-radius:var(--tfrad)"></div>
<span class="t " style="left:533.6px;top:549.9px;font-size:24px;letter-spacing:-0.07px;">text</span>
<svg class="i " style="left:681px;top:546px;color:var(--fic2)" width="32" height="32"><use href="#table"/></svg>
<div class="bx" style="left:735px;top:541px;width:202px;height:42px;background:var(--fbg);border-color:var(--fbd);border-radius:var(--tfrad)"></div>
<svg class="i " style="left:741px;top:546px;color:var(--fic)" width="32" height="32"><use href="#user"/></svg>
<span class="t " style="left:781.8px;top:549.9px;font-size:24px;letter-spacing:-0.07px;">text</span>
<svg class="i " style="left:897px;top:550px;color:var(--fic2)" width="31" height="24"><use href="#listi"/></svg>
<div class="bx" style="left:303px;top:598px;width:418px;height:43px;background:var(--fbg);border-color:var(--fbd);border-radius:var(--tfrad)"></div>
<svg class="i " style="left:307px;top:604px;color:var(--fic)" width="36" height="32"><use href="#searchdd"/></svg>
<span class="t b" style="left:598.4px;top:608.5px;font-size:24px;letter-spacing:-0.33px;color:var(--ficd)">Cc</span>
<span class="t b" style="left:640.4px;top:608.5px;font-size:24px;color:var(--ficd)">W</span>
<div class="" style="left:675px;top:603px;width:1px;height:33px;background:var(--cosep)"></div>
<span class="t b" style="left:686.6px;top:608.5px;font-size:24px;color:var(--ficd)">.</span>
<span class="t " style="left:693.6px;top:605.4px;font-size:44px;color:var(--ficd)">*</span>
<div class="bx" style="left:735px;top:598px;width:202px;height:43px;background:var(--fbg);border-color:var(--fbd);border-radius:var(--tfrad)"></div>
<span class="t " style="left:747.6px;top:608.3px;font-size:24px;letter-spacing:0.02px;">clear me</span>
<svg class="i " style="left:907px;top:612px;color:var(--xic)" width="17" height="16"><use href="#xx"/></svg>
<span class="t " style="left:300.0px;top:658.9px;font-size:72px;transform:scaleX(1.000);transform-origin:0 0;color:var(--hfg)">H00</span>
<span class="t " style="left:446.1px;top:669.0px;font-size:60px;transform:scaleX(0.981);transform-origin:0 0;color:var(--hfg)">H0</span>
<span class="t b" style="left:536.3px;top:679.2px;font-size:48px;transform:scaleX(0.884);transform-origin:0 0;color:var(--hfg)">H1</span>
<span class="t b" style="left:604.4px;top:689.3px;font-size:36px;transform:scaleX(1.014);transform-origin:0 0;color:var(--hfg)">H2</span>
<span class="t b" style="left:664.4px;top:694.4px;font-size:30px;transform:scaleX(1.009);transform-origin:0 0;color:var(--hfg)">H3</span>
<span class="t b" style="left:719.0px;top:697.5px;font-size:24px;transform:scaleX(1.022);transform-origin:0 0;color:var(--hfg)">H4</span>
<span class="t lt" style="left:806.2px;top:681.7px;font-size:45px;transform:scaleX(0.955);transform-origin:0 0;color:var(--hfg)">light</span>
<span class="t b" style="left:912.0px;top:679.2px;font-size:48px;transform:scaleX(0.969);transform-origin:0 0;color:var(--hfg)">semibold</span>
<span class="t " style="left:303.0px;top:745.7px;font-size:28px;letter-spacing:-0.17px;">large</span>
<span class="t " style="left:378.0px;top:749.1px;font-size:24px;letter-spacing:0.60px;">default</span>
<span class="t " style="left:468.0px;top:750.8px;font-size:22px;letter-spacing:0.62px;">medium</span>
<span class="t " style="left:563.0px;top:751.5px;font-size:20px;letter-spacing:-0.56px;">small</span>
<span class="t " style="left:622.0px;top:754.2px;font-size:18px;letter-spacing:0.67px;">mini</span>
<span class="t mono" style="left:716.0px;top:752.5px;font-size:22px;letter-spacing:0.02px;">monospaced</span>
<div class="ln" style="left:23px;top:786px;width:1592px;height:2px;"></div>
<div class="bx" style="left:23px;top:803px;width:240px;height:44px;background:var(--cobg);border-color:var(--cobd)"></div>
<span class="t " style="left:36.0px;top:814.3px;font-size:24px;">Carbon</span>
<svg class="i " style="left:233px;top:820px;color:var(--coar)" width="18" height="11"><use href="#tri"/></svg>
<div class="bx" style="left:283px;top:811px;width:27px;height:28px;background:var(--cbbg);border-color:var(--cbbd);border-radius:5px"></div>
<span class="t " style="left:318.0px;top:814.3px;font-size:24px;letter-spacing:1.08px;">right-to-left</span>
<div class="bx" style="left:471px;top:811px;width:28px;height:28px;background:var(--cbsbg);border-color:var(--cbsbd);border-radius:5px"></div>
<svg class="i " style="left:471px;top:811px;color:var(--cbck)" width="28" height="28"><use href="#check"/></svg>
<span class="t " style="left:506.0px;top:814.3px;font-size:24px;letter-spacing:0.32px;">enabled</span>
<span class="t " style="left:783.6px;top:814.3px;font-size:24px;letter-spacing:-0.42px;">(Java 17;  system scale factor 2.0; Segoe UI 12)</span>
<div class="bx" style="left:1465px;top:803px;width:150px;height:44px;background:var(--clbg);border-color:var(--clbd)"></div>
<span class="t b" style="left:1509.4px;top:814.3px;font-size:24px;letter-spacing:-1.15px;color:var(--clfg)">Close</span>
<span class="t " style="left:1246.4px;top:173.1px;font-size:24px;letter-spacing:-0.68px;">Themes:</span>
<svg class="i " style="left:1390px;top:171px;color:var(--ic)" width="26" height="27"><use href="#dl"/></svg>
<svg class="i " style="left:1440px;top:169px;color:var(--ghic)" width="30" height="29"><use href="#gh"/></svg>
<div class="bx" style="left:1499px;top:162px;width:116px;height:43px;background:var(--cobg);border-color:var(--cobd)"></div>
<span class="t " style="left:1512.6px;top:173.1px;font-size:24px;letter-spacing:0.66px;">all</span>
<svg class="i " style="left:1586px;top:180px;color:var(--coar)" width="17" height="10"><use href="#tri"/></svg>
<div class="bx" style="left:1245px;top:218px;width:370px;height:541px;background:var(--lbg);border-color:var(--lbd);border-radius:0;overflow:hidden"><span class="t " style="left:12.4px;top:5.5px;font-size:24px;">Arc Dark</span><span class="t " style="left:12.4px;top:41.5px;font-size:24px;">Arc Dark - Orange</span><div style="left:0;top:72px;width:346px;height:36px;background:var(--lsel)"></div><span class="t " style="left:11.4px;top:77.5px;font-size:24px;color:var(--lselfg)">Carbon</span><span class="t " style="left:11.4px;top:113.5px;font-size:24px;">Cobalt 2</span><span class="t " style="left:11.4px;top:149.5px;font-size:24px;">Cyan light</span><span class="t " style="left:11.4px;top:185.5px;font-size:24px;">Dark Flat</span><span class="t " style="left:11.4px;top:221.5px;font-size:24px;">Dark purple</span><span class="t " style="left:11.4px;top:257.5px;font-size:24px;">Dracula</span><span class="t " style="left:11.4px;top:293.5px;font-size:24px;">Gradianto Dark Fuchsia</span><span class="t " style="left:11.4px;top:329.5px;font-size:24px;">Gradianto Deep Ocean</span><span class="t " style="left:11.4px;top:365.5px;font-size:24px;">Gradianto Midnight Blue</span><span class="t " style="left:11.4px;top:401.5px;font-size:24px;">Gradianto Nature Green</span><span class="t " style="left:11.4px;top:437.5px;font-size:24px;">Gray</span><span class="t " style="left:11.4px;top:473.5px;font-size:24px;">Gruvbox Dark Hard</span><span class="t " style="left:11.4px;top:509.5px;font-size:24px;">Gruvbox Dark Medium</span><div style="left:346px;top:0;width:19px;height:540px;background:var(--sbtrack)"></div><div style="left:346px;top:72px;width:19px;height:113px;background:var(--sbthumb)"></div></div></div>
<div class="win" style="left:0px;top:1776px;--bg:#eee8d5;--tbg:#eee8d5;--wbd:#b3b1a8;--fg:#2e4e58;--fgd:#a9aca6;--mfg:#2e4e58;--tfg:#5c6f73;--tic:#3d565e;--ic:#3d565e;--tsep:#d4cfbf;--tgl:#f7d98a;--acfg:#8a948f;--swsel:#f7d98a;--tabline:#cfcaba;--acc:#3b7cc4;--btnbg:#fdf6e3;--btnbd:#b7b5aa;--btndbg:#eee8d5;--btndbd:#d0ccbe;--helpfg:#2d7ce0;--helpdfg:#b0b2ab;--cbbg:#ffffff;--cbbd:#adaba2;--cbdbg:#f1ecdb;--cbdbd:#cdc9bb;--cbsbg:#3b7bc5;--cbsbd:#3b7bc5;--cbck:#ffffff;--cbsdbg:#f1ecdb;--cbsdbd:#cdc9bb;--cbsdck:#b0b2ab;--rdot:#ffffff;--cobg:#fdf6e3;--cobd:#b7b5aa;--codbg:#eee8d5;--codbd:#d0ccbe;--coar:#2e4e58;--codar:#a9aca6;--cosep:#cdc9bb;--codsep:#d6d2c3;--focus:#86add0;--fbg:#fdf6e3;--fbd:#b7b5aa;--fdbg:#eee8d5;--fdbd:#d0ccbe;--fnebg:#eee8d5;--fic:#7e8a88;--ficd:#b5b8b0;--ph:#8b9693;--lbg:#fdf6e3;--lbd:#b7b5aa;--lsel:#d3d3d0;--lselfg:#2e4e58;--catfg:#9a9da2;--catln:#9a9da2;--sbtrack:#f5f2e6;--sbthumb:#dcd9cc;--sep:#cfcaba;--clbg:#4380c2;--clbd:#3d76b5;--clfg:#ffffff;--caret:#2e4e58;--uic:#3d565e;--focus2:#97c0e6;--fnebd:#b7b5aa;--tfrad:2px;--eyeic:#3d565e;--btnfg:#2e4e58;--helpbg:#fdf6e3;--helpbd:#b7b5aa;--helpdbg:#eee8d5;--xic:#7e8a88;--ghic:#2e4e58;--fic2:#7e8a88;--hfg:#2e4e58;--wbw:2px;--cebg:#fdf6e3;--cobtn:#fdf6e3"><div class="frame" style="left:0px;top:2px;width:1638px;height:867px;"></div>
<div style="left:17px;top:18px;width:33px;height:32px;background:#dd5e05"></div>
<span class="t b" style="left:24px;top:20px;font-size:26px;color:#fff;-webkit-text-stroke:.8px #fff;transform:scaleX(.78);transform-origin:0 0">F</span>
<span class="t b" style="left:35.5px;top:26.5px;font-size:19px;color:#fff;-webkit-text-stroke:.8px #fff;transform:scaleX(.72);transform-origin:0 0">L</span>
<span class="t mn" style="left:81.0px;top:23.5px;font-size:24px;letter-spacing:-0.71px;">File</span>
<span class="t mn" style="left:150.0px;top:23.5px;font-size:24px;letter-spacing:-0.56px;">Edit</span>
<span class="t mn" style="left:223.2px;top:23.5px;font-size:24px;letter-spacing:-0.55px;">View</span>
<span class="t mn" style="left:306.6px;top:23.5px;font-size:24px;letter-spacing:-0.25px;">Font</span>
<span class="t mn" style="left:386.0px;top:23.5px;font-size:24px;letter-spacing:0.28px;">Options</span>
<span class="t mn" style="left:502.6px;top:23.5px;font-size:24px;letter-spacing:0.26px;">Help</span>
<span class="t ti" style="left:748.0px;top:23.5px;font-size:24px;letter-spacing:-0.16px;">FlatLaf Demo</span>
<svg class="i " style="left:1330px;top:24px;color:var(--uic)" width="34" height="23"><use href="#users"/></svg>
<div class="" style="left:1407px;top:32px;width:20px;height:3px;background:var(--tic)"></div>
<div class="" style="left:1494px;top:24px;width:21px;height:20px;border:2px solid var(--tic);border-radius:1px"></div>
<svg class="i " style="left:1581px;top:22px;color:var(--tic)" width="24" height="24"><use href="#xx"/></svg>
<svg class="i " style="left:20px;top:84px;" width="32" height="32"><use href="#back"/></svg>
<svg class="i " style="left:73px;top:84px;" width="32" height="32"><use href="#fwd"/></svg>
<div class="" style="left:120px;top:80px;width:3px;height:39px;background:var(--tsep)"></div>
<svg class="i " style="left:140px;top:84px;" width="32" height="32"><use href="#cut"/></svg>
<svg class="i " style="left:191px;top:84px;" width="32" height="32"><use href="#copy"/></svg>
<svg class="i " style="left:244px;top:84px;" width="32" height="32"><use href="#paste"/></svg>
<div class="" style="left:291px;top:80px;width:3px;height:39px;background:var(--tsep)"></div>
<svg class="i " style="left:309px;top:84px;" width="32" height="32"><use href="#refresh"/></svg>
<div class="" style="left:357px;top:80px;width:3px;height:39px;background:var(--tsep)"></div>
<div class="" style="left:369px;top:78px;width:44px;height:44px;background:var(--tgl);border-radius:6px"></div>
<svg class="i " style="left:375px;top:84px;color:var(--eyeic)" width="32" height="32"><use href="#eye"/></svg>
<span class="t " style="left:1119.6px;top:89.5px;font-size:24px;letter-spacing:-0.02px;color:var(--acfg)">Accent color:</span>
<div class="" style="left:1267px;top:79px;width:44px;height:43px;background:var(--swsel);border-radius:6px"></div>
<div class="" style="left:1275px;top:86px;width:28px;height:28px;background:#a5c5e0;border-radius:5px"></div>
<div class="" style="left:1327px;top:86px;width:28px;height:28px;background:#99c7ff;border-radius:5px"></div>
<div class="" style="left:1379px;top:86px;width:28px;height:28px;background:#e4bdfb;border-radius:5px"></div>
<div class="" style="left:1431px;top:86px;width:28px;height:28px;background:#ffa9a9;border-radius:5px"></div>
<div class="" style="left:1483px;top:86px;width:28px;height:28px;background:#ffd294;border-radius:5px"></div>
<div class="" style="left:1535px;top:86px;width:28px;height:28px;background:#ffe999;border-radius:5px"></div>
<div class="" style="left:1587px;top:86px;width:28px;height:28px;background:#a9e5a9;border-radius:5px"></div>
<span class="t " style="left:46.0px;top:176.7px;font-size:24px;letter-spacing:-0.23px;">Basic Components</span>
<span class="t " style="left:293.0px;top:176.7px;font-size:24px;letter-spacing:0.26px;">More Components</span>
<span class="t " style="left:542.0px;top:176.7px;font-size:24px;letter-spacing:0.04px;">Data Components</span>
<span class="t " style="left:785.0px;top:176.7px;font-size:24px;letter-spacing:-0.57px;">Tabs</span>
<span class="t " style="left:882.0px;top:176.7px;font-size:24px;letter-spacing:0.09px;">Option Pane</span>
<span class="t " style="left:1064.0px;top:176.7px;font-size:24px;letter-spacing:-1.20px;">Extras</span>
<div class="" style="left:23px;top:220px;width:1199px;height:2px;background:var(--tabline)"></div>
<div class="" style="left:23px;top:216px;width:246px;height:6px;background:var(--acc)"></div>
<span class="t " style="left:45.0px;top:269.1px;font-size:24px;letter-spacing:-0.06px;">JButton:</span>
<span class="t " style="left:45.0px;top:324.3px;font-size:24px;letter-spacing:-1.05px;">JCheckBox</span>
<span class="t " style="left:45.0px;top:378.3px;font-size:24px;letter-spacing:-0.26px;">JRadioButton:</span>
<span class="t " style="left:45.0px;top:434.9px;font-size:24px;letter-spacing:-0.52px;">JComboBox:</span>
<span class="t " style="left:45.0px;top:492.1px;font-size:24px;letter-spacing:-0.18px;">JSpinner / JTextField:</span>
<span class="t " style="left:44.0px;top:551.3px;font-size:24px;letter-spacing:0.21px;">Leading/trailing icons:</span>
<span class="t " style="left:44.0px;top:609.1px;font-size:24px;letter-spacing:0.24px;">Leading/trailing comp.:</span>
<span class="t " style="left:45.0px;top:697.9px;font-size:24px;letter-spacing:0.18px;">Typography / Fonts:</span>
<div class="bx" style="left:303px;top:259px;width:146px;height:42px;background:var(--btnbg);border-color:var(--btnbd)"></div>
<span class="t " style="left:332.6px;top:267.9px;font-size:24px;letter-spacing:-0.46px;color:var(--btnfg)">Enabled</span>
<div class="bx" style="left:519px;top:259px;width:152px;height:42px;background:var(--btndbg);border-color:var(--btndbd)"></div>
<span class="t dis" style="left:548.6px;top:267.9px;font-size:24px;letter-spacing:-0.06px;">Disabled</span>
<div class="bx" style="left:735px;top:259px;width:144px;height:42px;background:var(--btnbg);border-color:var(--btnbd);border-radius:0"></div>
<span class="t " style="left:770.4px;top:267.9px;font-size:24px;letter-spacing:-0.57px;color:var(--btnfg)">Square</span>
<div class="bx" style="left:951px;top:259px;width:144px;height:42px;background:var(--btnbg);border-color:var(--btnbd);border-radius:22px"></div>
<span class="t " style="left:988.2px;top:267.9px;font-size:24px;letter-spacing:0.26px;color:var(--btnfg)">Round</span>
<div class="bx" style="left:1110px;top:259px;width:42px;height:43px;background:var(--helpbg);border-color:var(--helpbd);border-radius:50%"></div>
<span class="t " style="left:1121.4px;top:265.1px;font-size:33px;color:var(--helpfg)">?</span>
<div class="bx" style="left:1168px;top:259px;width:42px;height:43px;background:var(--helpdbg);border-color:var(--btndbd);border-radius:50%"></div>
<span class="t " style="left:1179.4px;top:265.1px;font-size:33px;color:var(--helpdfg)">?</span>
<div class="bx" style="left:309px;top:322px;width:27px;height:27px;background:var(--cbbg);border-color:var(--cbbd);border-radius:5px"></div>
<span class="t " style="left:344.8px;top:324.3px;font-size:24px;letter-spacing:-0.46px;">Enabled</span>
<div class="bx" style="left:525px;top:322px;width:27px;height:27px;background:var(--cbdbg);border-color:var(--cbdbd);border-radius:5px"></div>
<span class="t dis" style="left:560.8px;top:324.3px;font-size:24px;letter-spacing:-0.12px;">Disabled</span>
<div class="bx" style="left:741px;top:322px;width:28px;height:27px;background:var(--cbsbg);border-color:var(--cbsbd);border-radius:5px"></div>
<svg class="i " style="left:741px;top:322px;color:var(--cbck)" width="28" height="27"><use href="#check"/></svg>
<span class="t " style="left:776.4px;top:324.3px;font-size:24px;letter-spacing:-0.15px;">Selected</span>
<div class="bx" style="left:957px;top:322px;width:28px;height:27px;background:var(--cbsdbg);border-color:var(--cbsdbd);border-radius:5px"></div>
<svg class="i " style="left:957px;top:322px;color:var(--cbsdck)" width="28" height="27"><use href="#check"/></svg>
<span class="t dis" style="left:993.0px;top:324.3px;font-size:24px;letter-spacing:-0.12px;">Selected disabled</span>
<div class="bx" style="left:308px;top:376px;width:29px;height:29px;background:var(--cbbg);border-color:var(--cbbd);border-radius:50%"></div>
<span class="t " style="left:344.8px;top:378.3px;font-size:24px;letter-spacing:-0.46px;">Enabled</span>
<div class="bx" style="left:524px;top:376px;width:29px;height:29px;background:var(--cbdbg);border-color:var(--cbdbd);border-radius:50%"></div>
<span class="t dis" style="left:560.8px;top:378.3px;font-size:24px;letter-spacing:-0.12px;">Disabled</span>
<div class="bx" style="left:740px;top:376px;width:29px;height:29px;background:var(--cbsbg);border-color:var(--cbsbd);border-radius:50%"></div>
<div class="" style="left:749px;top:385px;width:11px;height:11px;background:var(--rdot);border-radius:50%"></div>
<span class="t " style="left:776.4px;top:378.3px;font-size:24px;letter-spacing:-0.15px;">Selected</span>
<div class="bx" style="left:956px;top:376px;width:29px;height:29px;background:var(--cbsdbg);border-color:var(--cbsdbd);border-radius:50%"></div>
<div class="" style="left:965px;top:385px;width:11px;height:11px;background:var(--cbsdck);border-radius:50%"></div>
<span class="t dis" style="left:993.0px;top:378.3px;font-size:24px;letter-spacing:-0.12px;">Selected disabled</span>
<div class="bx" style="left:303px;top:424px;width:202px;height:43px;background:var(--cebg);border-color:var(--focus);border-width:2px;box-shadow:0 0 0 4.4px var(--focus2);border-radius:7.6px"></div>
<div class="" style="left:464px;top:426px;width:2px;height:39px;background:var(--cosep)"></div>
<svg class="i " style="left:475px;top:442px;color:var(--coar)" width="18" height="10"><use href="#tri"/></svg>
<span class="t " style="left:316.8px;top:433.9px;font-size:24px;letter-spacing:-0.31px;">Editable</span>
<div class="" style="left:401px;top:430px;width:2px;height:31px;background:var(--caret)"></div>
<div class="bx" style="left:519px;top:424px;width:202px;height:43px;background:var(--codbg);border-color:var(--codbd)"></div>
<div class="" style="left:680px;top:426px;width:2px;height:39px;background:var(--codsep)"></div>
<svg class="i " style="left:691px;top:442px;color:var(--codar)" width="18" height="10"><use href="#tri"/></svg>
<span class="t dis" style="left:532.6px;top:433.9px;font-size:24px;letter-spacing:-0.09px;">Disabled</span>
<div class="bx" style="left:735px;top:424px;width:202px;height:43px;background:var(--cobg);border-color:var(--cobd)"></div>
<svg class="i " style="left:907px;top:442px;color:var(--coar)" width="17" height="10"><use href="#tri"/></svg>
<span class="t " style="left:748.0px;top:433.9px;font-size:24px;letter-spacing:0.51px;">Not editable</span>
<div class="bx" style="left:951px;top:424px;width:260px;height:43px;background:var(--codbg);border-color:var(--codbd)"></div>
<svg class="i " style="left:1181px;top:442px;color:var(--codar)" width="18" height="10"><use href="#tri"/></svg>
<span class="t dis" style="left:964.0px;top:433.9px;font-size:24px;letter-spacing:0.12px;">Not editable dis...</span>
<div class="bx" style="left:303px;top:482px;width:202px;height:43px;background:var(--fbg);border-color:var(--fbd)"></div>
<div class="" style="left:464px;top:484px;width:2px;height:39px;background:var(--cosep)"></div>
<svg class="i " style="left:475px;top:492px;color:var(--coar)" width="18" height="9"><use href="#triup"/></svg>
<svg class="i " style="left:475px;top:505px;color:var(--coar)" width="18" height="10"><use href="#tri"/></svg>
<span class="t " style="left:433.6px;top:493.1px;font-size:24px;">0</span>
<div class="bx" style="left:519px;top:482px;width:202px;height:43px;background:var(--fdbg);border-color:var(--fdbd)"></div>
<div class="" style="left:680px;top:484px;width:2px;height:39px;background:var(--codsep)"></div>
<svg class="i " style="left:691px;top:492px;color:var(--codar)" width="18" height="9"><use href="#triup"/></svg>
<svg class="i " style="left:691px;top:505px;color:var(--codar)" width="18" height="10"><use href="#tri"/></svg>
<span class="t dis" style="left:649.2px;top:493.1px;font-size:24px;">0</span>
<div class="bx" style="left:735px;top:482px;width:202px;height:43px;background:var(--fbg);border-color:var(--fbd);border-radius:var(--tfrad)"></div>
<span class="t " style="left:748.0px;top:493.1px;font-size:24px;letter-spacing:-0.31px;">Editable</span>
<div class="bx" style="left:951px;top:482px;width:260px;height:43px;background:var(--fnebg);border-color:var(--fnebd);border-radius:var(--tfrad)"></div>
<span class="t " style="left:964.0px;top:493.1px;font-size:24px;letter-spacing:0.51px;">Not editable</span>
<div class="bx" style="left:303px;top:541px;width:202px;height:42px;background:var(--fbg);border-color:var(--fbd);border-radius:var(--tfrad)"></div>
<svg class="i " style="left:311px;top:547px;color:var(--fic)" width="30" height="30"><use href="#search"/></svg>
<span class="t " style="left:348.2px;top:549.9px;font-size:24px;letter-spacing:-0.78px;color:var(--ph)">Search</span>
<div class="bx" style="left:519px;top:541px;width:202px;height:42px;background:var(--fbg);border-color:var(--fbd);border-radius:var(--tfrad)"></div>
<span class="t " style="left:533.6px;top:549.9px;font-size:24px;letter-spacing:-0.07px;">text</span>
<svg class="i " style="left:681px;top:546px;color:var(--fic2)" width="32" height="32"><use href="#table"/></svg>
<div class="bx" style="left:735px;top:541px;width:202px;height:42px;background:var(--fbg);border-color:var(--fbd);border-radius:var(--tfrad)"></div>
<svg class="i " style="left:741px;top:546px;color:var(--fic)" width="32" height="32"><use href="#user"/></svg>
<span class="t " style="left:781.8px;top:549.9px;font-size:24px;letter-spacing:-0.07px;">text</span>
<svg class="i " style="left:897px;top:550px;color:var(--fic2)" width="31" height="24"><use href="#listi"/></svg>
<div class="bx" style="left:303px;top:598px;width:418px;height:43px;background:var(--fbg);border-color:var(--fbd);border-radius:var(--tfrad)"></div>
<svg class="i " style="left:307px;top:604px;color:var(--fic)" width="36" height="32"><use href="#searchdd"/></svg>
<span class="t b" style="left:598.4px;top:608.5px;font-size:24px;letter-spacing:-0.33px;color:var(--ficd)">Cc</span>
<span class="t b" style="left:640.4px;top:608.5px;font-size:24px;color:var(--ficd)">W</span>
<div class="" style="left:675px;top:603px;width:1px;height:33px;background:var(--cosep)"></div>
<span class="t b" style="left:686.6px;top:608.5px;font-size:24px;color:var(--ficd)">.</span>
<span class="t " style="left:693.6px;top:605.4px;font-size:44px;color:var(--ficd)">*</span>
<div class="bx" style="left:735px;top:598px;width:202px;height:43px;background:var(--fbg);border-color:var(--fbd);border-radius:var(--tfrad)"></div>
<span class="t " style="left:747.6px;top:608.3px;font-size:24px;letter-spacing:0.02px;">clear me</span>
<svg class="i " style="left:907px;top:612px;color:var(--xic)" width="17" height="16"><use href="#xx"/></svg>
<span class="t " style="left:300.0px;top:658.9px;font-size:72px;transform:scaleX(1.000);transform-origin:0 0;color:var(--hfg)">H00</span>
<span class="t " style="left:446.1px;top:669.0px;font-size:60px;transform:scaleX(0.981);transform-origin:0 0;color:var(--hfg)">H0</span>
<span class="t b" style="left:536.3px;top:679.2px;font-size:48px;transform:scaleX(0.884);transform-origin:0 0;color:var(--hfg)">H1</span>
<span class="t b" style="left:604.4px;top:689.3px;font-size:36px;transform:scaleX(1.014);transform-origin:0 0;color:var(--hfg)">H2</span>
<span class="t b" style="left:664.4px;top:694.4px;font-size:30px;transform:scaleX(1.009);transform-origin:0 0;color:var(--hfg)">H3</span>
<span class="t b" style="left:719.0px;top:697.5px;font-size:24px;transform:scaleX(1.022);transform-origin:0 0;color:var(--hfg)">H4</span>
<span class="t lt" style="left:806.2px;top:681.7px;font-size:45px;transform:scaleX(0.955);transform-origin:0 0;color:var(--hfg)">light</span>
<span class="t b" style="left:912.0px;top:679.2px;font-size:48px;transform:scaleX(0.969);transform-origin:0 0;color:var(--hfg)">semibold</span>
<span class="t " style="left:303.0px;top:745.7px;font-size:28px;letter-spacing:-0.17px;">large</span>
<span class="t " style="left:378.0px;top:749.1px;font-size:24px;letter-spacing:0.60px;">default</span>
<span class="t " style="left:468.0px;top:750.8px;font-size:22px;letter-spacing:0.62px;">medium</span>
<span class="t " style="left:563.0px;top:751.5px;font-size:20px;letter-spacing:-0.56px;">small</span>
<span class="t " style="left:622.0px;top:754.2px;font-size:18px;letter-spacing:0.67px;">mini</span>
<span class="t mono" style="left:716.0px;top:752.5px;font-size:22px;letter-spacing:0.02px;">monospaced</span>
<div class="ln" style="left:23px;top:786px;width:1592px;height:2px;"></div>
<div class="bx" style="left:23px;top:803px;width:240px;height:44px;background:var(--cobg);border-color:var(--cobd)"></div>
<span class="t " style="left:36.0px;top:814.3px;font-size:24px;">Solarized Light</span>
<svg class="i " style="left:233px;top:820px;color:var(--coar)" width="18" height="11"><use href="#tri"/></svg>
<div class="bx" style="left:283px;top:811px;width:27px;height:28px;background:var(--cbbg);border-color:var(--cbbd);border-radius:5px"></div>
<span class="t " style="left:318.0px;top:814.3px;font-size:24px;letter-spacing:1.08px;">right-to-left</span>
<div class="bx" style="left:471px;top:811px;width:28px;height:28px;background:var(--cbsbg);border-color:var(--cbsbd);border-radius:5px"></div>
<svg class="i " style="left:471px;top:811px;color:var(--cbck)" width="28" height="28"><use href="#check"/></svg>
<span class="t " style="left:506.0px;top:814.3px;font-size:24px;letter-spacing:0.32px;">enabled</span>
<span class="t " style="left:783.6px;top:814.3px;font-size:24px;letter-spacing:-0.42px;">(Java 17;  system scale factor 2.0; Segoe UI 12)</span>
<div class="bx" style="left:1465px;top:803px;width:150px;height:44px;background:var(--clbg);border-color:var(--clbd)"></div>
<span class="t b" style="left:1509.4px;top:814.3px;font-size:24px;letter-spacing:-1.15px;color:var(--clfg)">Close</span>
<span class="t " style="left:1246.4px;top:173.1px;font-size:24px;letter-spacing:-0.68px;">Themes:</span>
<svg class="i " style="left:1390px;top:171px;color:var(--ic)" width="26" height="27"><use href="#dl"/></svg>
<svg class="i " style="left:1440px;top:169px;color:var(--ghic)" width="30" height="29"><use href="#gh"/></svg>
<div class="bx" style="left:1499px;top:162px;width:116px;height:43px;background:var(--cobg);border-color:var(--cobd)"></div>
<span class="t " style="left:1512.6px;top:173.1px;font-size:24px;letter-spacing:0.66px;">all</span>
<svg class="i " style="left:1586px;top:180px;color:var(--coar)" width="17" height="10"><use href="#tri"/></svg>
<div class="bx" style="left:1245px;top:218px;width:370px;height:541px;background:var(--lbg);border-color:var(--lbd);border-radius:0;overflow:hidden"><span class="t " style="left:11.4px;top:5.5px;font-size:24px;">Gradianto Nature Green</span><span class="t " style="left:11.4px;top:41.5px;font-size:24px;">Gray</span><span class="t " style="left:11.4px;top:77.5px;font-size:24px;">Gruvbox Dark Hard</span><span class="t " style="left:11.4px;top:113.5px;font-size:24px;">Gruvbox Dark Medium</span><span class="t " style="left:11.4px;top:149.5px;font-size:24px;">Gruvbox Dark Soft</span><span class="t " style="left:11.4px;top:185.5px;font-size:24px;">Hiberbee Dark</span><span class="t " style="left:11.4px;top:221.5px;font-size:24px;">High contrast</span><span class="t " style="left:11.4px;top:257.5px;font-size:24px;">Light Flat</span><span class="t " style="left:11.4px;top:293.5px;font-size:24px;">Material Design Dark</span><span class="t " style="left:11.4px;top:329.5px;font-size:24px;">Monocai</span><span class="t " style="left:11.4px;top:365.5px;font-size:24px;">Nord</span><span class="t " style="left:11.4px;top:401.5px;font-size:24px;">One Dark</span><span class="t " style="left:11.4px;top:437.5px;font-size:24px;">Solarized Dark</span><div style="left:0;top:468px;width:346px;height:36px;background:var(--lsel)"></div><span class="t " style="left:11.4px;top:473.5px;font-size:24px;color:var(--lselfg)">Solarized Light</span><span class="t " style="left:11.4px;top:509.5px;font-size:24px;">Spacegray</span><div style="left:346px;top:0;width:19px;height:540px;background:var(--sbtrack)"></div><div style="left:346px;top:156px;width:19px;height:111px;background:var(--sbthumb)"></div></div></div>
<div class="win" style="left:1658px;top:1776px;--bg:#2d2c3a;--tbg:#2d2c3a;--wbd:transparent;--fg:#d0d0d9;--fgd:#6f6f86;--mfg:#d0d0d9;--tfg:#8a8a9e;--tic:#5c5c72;--ic:#d0d0d9;--tsep:#45435a;--tgl:#55506f;--acfg:#6e6e84;--swsel:#5a5478;--tabline:#1f1e29;--acc:#a254dd;--btnbg:#433f5c;--btnbd:#4a4664;--btndbg:#2c2c3b;--btndbd:#434359;--helpfg:#e0e0e8;--helpdfg:#9494a8;--cbbg:#2e2e3e;--cbbd:#6c6c82;--cbdbg:#2c2c3b;--cbdbd:#48485e;--cbsbg:#2e2e3e;--cbsbd:#6c6c82;--cbck:#f0f0f5;--cbsdbg:#2c2c3b;--cbsdbd:#48485e;--cbsdck:#6f6f86;--rdot:#f0f0f5;--cobg:#3a3a4e;--cobd:#4a4a62;--codbg:#2c2c3b;--codbd:#434359;--coar:#d0d0d9;--codar:#4e4e66;--cosep:#4a4a62;--codsep:#434359;--focus:#6f3891;--fbg:#363648;--fbd:#46465c;--fdbg:#2c2c3b;--fdbd:#434359;--fnebg:#2c2c3b;--fic:#9a9aae;--ficd:#7a7a92;--ph:#8a8a9e;--lbg:#2a2938;--lbd:#413f57;--lsel:#3d3a52;--lselfg:#d0d0d9;--catfg:#8a8a9e;--catln:#8a8a9e;--sbtrack:#2a2938;--sbthumb:#3e3d55;--sep:#3c3c50;--clbg:#7b3fb0;--clbd:#8a4cc0;--clfg:#ffffff;--caret:#e0e0e8;--wbw:1px;--uic:#c8c8d4;--btnfg:#e0e0e8;--focus2:#7d3fa3;--cebg:#3a3850;--cobtn:#2d2c3a;--fnebd:#4a4a60;--fic2:#cfcfda;--xic:#4c4c62;--ghic:#ffffff;--hfg:#dedee6;--eyeic:#d0d0d9;--helpbg:#433f5c;--helpbd:#4a4664;--helpdbg:#2c2c3b;--tfrad:5px"><div class="frame" style="left:0px;top:2px;width:1638px;height:867px;"></div>
<div style="left:17px;top:18px;width:33px;height:32px;background:#dd5e05"></div>
<span class="t b" style="left:24px;top:20px;font-size:26px;color:#fff;-webkit-text-stroke:.8px #fff;transform:scaleX(.78);transform-origin:0 0">F</span>
<span class="t b" style="left:35.5px;top:26.5px;font-size:19px;color:#fff;-webkit-text-stroke:.8px #fff;transform:scaleX(.72);transform-origin:0 0">L</span>
<span class="t mn" style="left:81.0px;top:23.5px;font-size:24px;letter-spacing:-0.71px;">File</span>
<span class="t mn" style="left:150.0px;top:23.5px;font-size:24px;letter-spacing:-0.56px;">Edit</span>
<span class="t mn" style="left:223.2px;top:23.5px;font-size:24px;letter-spacing:-0.55px;">View</span>
<span class="t mn" style="left:306.6px;top:23.5px;font-size:24px;letter-spacing:-0.25px;">Font</span>
<span class="t mn" style="left:386.0px;top:23.5px;font-size:24px;letter-spacing:0.28px;">Options</span>
<span class="t mn" style="left:502.6px;top:23.5px;font-size:24px;letter-spacing:0.26px;">Help</span>
<span class="t ti" style="left:748.0px;top:23.5px;font-size:24px;letter-spacing:-0.16px;">FlatLaf Demo</span>
<svg class="i " style="left:1330px;top:24px;color:var(--uic)" width="34" height="23"><use href="#users"/></svg>
<div class="" style="left:1407px;top:32px;width:20px;height:3px;background:var(--tic)"></div>
<div class="" style="left:1494px;top:24px;width:21px;height:20px;border:2px solid var(--tic);border-radius:1px"></div>
<svg class="i " style="left:1581px;top:22px;color:var(--tic)" width="24" height="24"><use href="#xx"/></svg>
<svg class="i " style="left:20px;top:84px;" width="32" height="32"><use href="#back"/></svg>
<svg class="i " style="left:73px;top:84px;" width="32" height="32"><use href="#fwd"/></svg>
<div class="" style="left:120px;top:80px;width:3px;height:39px;background:var(--tsep)"></div>
<svg class="i " style="left:140px;top:84px;" width="32" height="32"><use href="#cut"/></svg>
<svg class="i " style="left:191px;top:84px;" width="32" height="32"><use href="#copy"/></svg>
<svg class="i " style="left:244px;top:84px;" width="32" height="32"><use href="#paste"/></svg>
<div class="" style="left:291px;top:80px;width:3px;height:39px;background:var(--tsep)"></div>
<svg class="i " style="left:309px;top:84px;" width="32" height="32"><use href="#refresh"/></svg>
<div class="" style="left:357px;top:80px;width:3px;height:39px;background:var(--tsep)"></div>
<div class="" style="left:369px;top:78px;width:44px;height:44px;background:var(--tgl);border-radius:6px"></div>
<svg class="i " style="left:375px;top:84px;color:var(--eyeic)" width="32" height="32"><use href="#eye"/></svg>
<span class="t " style="left:1119.6px;top:89.5px;font-size:24px;letter-spacing:-0.02px;color:var(--acfg)">Accent color:</span>
<div class="" style="left:1267px;top:79px;width:44px;height:43px;background:var(--swsel);border-radius:6px"></div>
<div class="" style="left:1275px;top:86px;width:28px;height:28px;background:#2c3b5e;border-radius:5px"></div>
<div class="" style="left:1327px;top:86px;width:28px;height:28px;background:#0b4c90;border-radius:5px"></div>
<div class="" style="left:1379px;top:86px;width:28px;height:28px;background:#6a3289;border-radius:5px"></div>
<div class="" style="left:1431px;top:86px;width:28px;height:28px;background:#8a2a25;border-radius:5px"></div>
<div class="" style="left:1483px;top:86px;width:28px;height:28px;background:#8a560f;border-radius:5px"></div>
<div class="" style="left:1535px;top:86px;width:28px;height:28px;background:#8a6f0a;border-radius:5px"></div>
<div class="" style="left:1587px;top:86px;width:28px;height:28px;background:#1e7a33;border-radius:5px"></div>
<span class="t " style="left:46.0px;top:176.7px;font-size:24px;letter-spacing:-0.23px;">Basic Components</span>
<span class="t " style="left:293.0px;top:176.7px;font-size:24px;letter-spacing:0.26px;">More Components</span>
<span class="t " style="left:542.0px;top:176.7px;font-size:24px;letter-spacing:0.04px;">Data Components</span>
<span class="t " style="left:785.0px;top:176.7px;font-size:24px;letter-spacing:-0.57px;">Tabs</span>
<span class="t " style="left:882.0px;top:176.7px;font-size:24px;letter-spacing:0.09px;">Option Pane</span>
<span class="t " style="left:1064.0px;top:176.7px;font-size:24px;letter-spacing:-1.20px;">Extras</span>
<div class="" style="left:23px;top:220px;width:1199px;height:2px;background:var(--tabline)"></div>
<div class="" style="left:23px;top:216px;width:246px;height:6px;background:var(--acc)"></div>
<span class="t " style="left:45.0px;top:269.1px;font-size:24px;letter-spacing:-0.06px;">JButton:</span>
<span class="t " style="left:45.0px;top:324.3px;font-size:24px;letter-spacing:-1.05px;">JCheckBox</span>
<span class="t " style="left:45.0px;top:378.3px;font-size:24px;letter-spacing:-0.26px;">JRadioButton:</span>
<span class="t " style="left:45.0px;top:434.9px;font-size:24px;letter-spacing:-0.52px;">JComboBox:</span>
<span class="t " style="left:45.0px;top:492.1px;font-size:24px;letter-spacing:-0.18px;">JSpinner / JTextField:</span>
<span class="t " style="left:44.0px;top:551.3px;font-size:24px;letter-spacing:0.21px;">Leading/trailing icons:</span>
<span class="t " style="left:44.0px;top:609.1px;font-size:24px;letter-spacing:0.24px;">Leading/trailing comp.:</span>
<span class="t " style="left:45.0px;top:697.9px;font-size:24px;letter-spacing:0.18px;">Typography / Fonts:</span>
<div class="bx" style="left:303px;top:259px;width:146px;height:42px;background:var(--btnbg);border-color:var(--btnbd)"></div>
<span class="t " style="left:332.6px;top:267.9px;font-size:24px;letter-spacing:-0.46px;color:var(--btnfg)">Enabled</span>
<div class="bx" style="left:519px;top:259px;width:152px;height:42px;background:var(--btndbg);border-color:var(--btndbd)"></div>
<span class="t dis" style="left:548.6px;top:267.9px;font-size:24px;letter-spacing:-0.06px;">Disabled</span>
<div class="bx" style="left:735px;top:259px;width:144px;height:42px;background:var(--btnbg);border-color:var(--btnbd);border-radius:0"></div>
<span class="t " style="left:770.4px;top:267.9px;font-size:24px;letter-spacing:-0.57px;color:var(--btnfg)">Square</span>
<div class="bx" style="left:951px;top:259px;width:144px;height:42px;background:var(--btnbg);border-color:var(--btnbd);border-radius:22px"></div>
<span class="t " style="left:988.2px;top:267.9px;font-size:24px;letter-spacing:0.26px;color:var(--btnfg)">Round</span>
<div class="bx" style="left:1110px;top:259px;width:42px;height:43px;background:var(--helpbg);border-color:var(--helpbd);border-radius:50%"></div>
<span class="t " style="left:1121.4px;top:265.1px;font-size:33px;color:var(--helpfg)">?</span>
<div class="bx" style="left:1168px;top:259px;width:42px;height:43px;background:var(--helpdbg);border-color:var(--btndbd);border-radius:50%"></div>
<span class="t " style="left:1179.4px;top:265.1px;font-size:33px;color:var(--helpdfg)">?</span>
<div class="bx" style="left:309px;top:322px;width:27px;height:27px;background:var(--cbbg);border-color:var(--cbbd);border-radius:5px"></div>
<span class="t " style="left:344.8px;top:324.3px;font-size:24px;letter-spacing:-0.46px;">Enabled</span>
<div class="bx" style="left:525px;top:322px;width:27px;height:27px;background:var(--cbdbg);border-color:var(--cbdbd);border-radius:5px"></div>
<span class="t dis" style="left:560.8px;top:324.3px;font-size:24px;letter-spacing:-0.12px;">Disabled</span>
<div class="bx" style="left:741px;top:322px;width:28px;height:27px;background:var(--cbsbg);border-color:var(--cbsbd);border-radius:5px"></div>
<svg class="i " style="left:741px;top:322px;color:var(--cbck)" width="28" height="27"><use href="#check"/></svg>
<span class="t " style="left:776.4px;top:324.3px;font-size:24px;letter-spacing:-0.15px;">Selected</span>
<div class="bx" style="left:957px;top:322px;width:28px;height:27px;background:var(--cbsdbg);border-color:var(--cbsdbd);border-radius:5px"></div>
<svg class="i " style="left:957px;top:322px;color:var(--cbsdck)" width="28" height="27"><use href="#check"/></svg>
<span class="t dis" style="left:993.0px;top:324.3px;font-size:24px;letter-spacing:-0.12px;">Selected disabled</span>
<div class="bx" style="left:308px;top:376px;width:29px;height:29px;background:var(--cbbg);border-color:var(--cbbd);border-radius:50%"></div>
<span class="t " style="left:344.8px;top:378.3px;font-size:24px;letter-spacing:-0.46px;">Enabled</span>
<div class="bx" style="left:524px;top:376px;width:29px;height:29px;background:var(--cbdbg);border-color:var(--cbdbd);border-radius:50%"></div>
<span class="t dis" style="left:560.8px;top:378.3px;font-size:24px;letter-spacing:-0.12px;">Disabled</span>
<div class="bx" style="left:740px;top:376px;width:29px;height:29px;background:var(--cbsbg);border-color:var(--cbsbd);border-radius:50%"></div>
<div class="" style="left:749px;top:385px;width:11px;height:11px;background:var(--rdot);border-radius:50%"></div>
<span class="t " style="left:776.4px;top:378.3px;font-size:24px;letter-spacing:-0.15px;">Selected</span>
<div class="bx" style="left:956px;top:376px;width:29px;height:29px;background:var(--cbsdbg);border-color:var(--cbsdbd);border-radius:50%"></div>
<div class="" style="left:965px;top:385px;width:11px;height:11px;background:var(--cbsdck);border-radius:50%"></div>
<span class="t dis" style="left:993.0px;top:378.3px;font-size:24px;letter-spacing:-0.12px;">Selected disabled</span>
<div class="bx" style="left:303px;top:424px;width:202px;height:43px;background:var(--cebg);border-color:var(--focus);border-width:2px;box-shadow:0 0 0 4.2px var(--focus2);border-radius:7.5px"></div>
<div class="" style="left:466px;top:426px;width:37px;height:39px;background:var(--cobtn)"></div>
<div class="" style="left:464px;top:426px;width:2px;height:39px;background:var(--cosep)"></div>
<svg class="i " style="left:475px;top:442px;color:var(--coar)" width="18" height="10"><use href="#tri"/></svg>
<span class="t " style="left:316.8px;top:433.9px;font-size:24px;letter-spacing:-0.31px;">Editable</span>
<div class="" style="left:401px;top:430px;width:2px;height:31px;background:var(--caret)"></div>
<div class="bx" style="left:519px;top:424px;width:202px;height:43px;background:var(--codbg);border-color:var(--codbd)"></div>
<div class="" style="left:680px;top:426px;width:2px;height:39px;background:var(--codsep)"></div>
<svg class="i " style="left:691px;top:442px;color:var(--codar)" width="18" height="10"><use href="#tri"/></svg>
<span class="t dis" style="left:532.6px;top:433.9px;font-size:24px;letter-spacing:-0.09px;">Disabled</span>
<div class="bx" style="left:735px;top:424px;width:202px;height:43px;background:var(--cobg);border-color:var(--cobd)"></div>
<svg class="i " style="left:907px;top:442px;color:var(--coar)" width="17" height="10"><use href="#tri"/></svg>
<span class="t " style="left:748.0px;top:433.9px;font-size:24px;letter-spacing:0.51px;">Not editable</span>
<div class="bx" style="left:951px;top:424px;width:260px;height:43px;background:var(--codbg);border-color:var(--codbd)"></div>
<svg class="i " style="left:1181px;top:442px;color:var(--codar)" width="18" height="10"><use href="#tri"/></svg>
<span class="t dis" style="left:964.0px;top:433.9px;font-size:24px;letter-spacing:0.12px;">Not editable dis...</span>
<div class="bx" style="left:303px;top:482px;width:202px;height:43px;background:var(--fbg);border-color:var(--fbd)"></div>
<div class="" style="left:464px;top:484px;width:2px;height:39px;background:var(--cosep)"></div>
<svg class="i " style="left:475px;top:492px;color:var(--coar)" width="18" height="9"><use href="#triup"/></svg>
<svg class="i " style="left:475px;top:505px;color:var(--coar)" width="18" height="10"><use href="#tri"/></svg>
<span class="t " style="left:433.6px;top:493.1px;font-size:24px;">0</span>
<div class="bx" style="left:519px;top:482px;width:202px;height:43px;background:var(--fdbg);border-color:var(--fdbd)"></div>
<div class="" style="left:680px;top:484px;width:2px;height:39px;background:var(--codsep)"></div>
<svg class="i " style="left:691px;top:492px;color:var(--codar)" width="18" height="9"><use href="#triup"/></svg>
<svg class="i " style="left:691px;top:505px;color:var(--codar)" width="18" height="10"><use href="#tri"/></svg>
<span class="t dis" style="left:649.2px;top:493.1px;font-size:24px;">0</span>
<div class="bx" style="left:735px;top:482px;width:202px;height:43px;background:var(--fbg);border-color:var(--fbd);border-radius:var(--tfrad)"></div>
<span class="t " style="left:748.0px;top:493.1px;font-size:24px;letter-spacing:-0.31px;">Editable</span>
<div class="bx" style="left:951px;top:482px;width:260px;height:43px;background:var(--fnebg);border-color:var(--fnebd);border-radius:var(--tfrad)"></div>
<span class="t " style="left:964.0px;top:493.1px;font-size:24px;letter-spacing:0.51px;">Not editable</span>
<div class="bx" style="left:303px;top:541px;width:202px;height:42px;background:var(--fbg);border-color:var(--fbd);border-radius:var(--tfrad)"></div>
<svg class="i " style="left:311px;top:547px;color:var(--fic)" width="30" height="30"><use href="#search"/></svg>
<span class="t " style="left:348.2px;top:549.9px;font-size:24px;letter-spacing:-0.78px;color:var(--ph)">Search</span>
<div class="bx" style="left:519px;top:541px;width:202px;height:42px;background:var(--fbg);border-color:var(--fbd);border-radius:var(--tfrad)"></div>
<span class="t " style="left:533.6px;top:549.9px;font-size:24px;letter-spacing:-0.07px;">text</span>
<svg class="i " style="left:681px;top:546px;color:var(--fic2)" width="32" height="32"><use href="#table"/></svg>
<div class="bx" style="left:735px;top:541px;width:202px;height:42px;background:var(--fbg);border-color:var(--fbd);border-radius:var(--tfrad)"></div>
<svg class="i " style="left:741px;top:546px;color:var(--fic)" width="32" height="32"><use href="#user"/></svg>
<span class="t " style="left:781.8px;top:549.9px;font-size:24px;letter-spacing:-0.07px;">text</span>
<svg class="i " style="left:897px;top:550px;color:var(--fic2)" width="31" height="24"><use href="#listi"/></svg>
<div class="bx" style="left:303px;top:598px;width:418px;height:43px;background:var(--fbg);border-color:var(--fbd);border-radius:var(--tfrad)"></div>
<svg class="i " style="left:307px;top:604px;color:var(--fic)" width="36" height="32"><use href="#searchdd"/></svg>
<span class="t b" style="left:598.4px;top:608.5px;font-size:24px;letter-spacing:-0.33px;color:var(--ficd)">Cc</span>
<span class="t b" style="left:640.4px;top:608.5px;font-size:24px;color:var(--ficd)">W</span>
<div class="" style="left:675px;top:603px;width:1px;height:33px;background:var(--cosep)"></div>
<span class="t b" style="left:686.6px;top:608.5px;font-size:24px;color:var(--ficd)">.</span>
<span class="t " style="left:693.6px;top:605.4px;font-size:44px;color:var(--ficd)">*</span>
<div class="bx" style="left:735px;top:598px;width:202px;height:43px;background:var(--fbg);border-color:var(--fbd);border-radius:var(--tfrad)"></div>
<span class="t " style="left:747.6px;top:608.3px;font-size:24px;letter-spacing:0.02px;">clear me</span>
<svg class="i " style="left:907px;top:612px;color:var(--xic)" width="17" height="16"><use href="#xx"/></svg>
<span class="t " style="left:300.0px;top:658.9px;font-size:72px;transform:scaleX(1.000);transform-origin:0 0;color:var(--hfg)">H00</span>
<span class="t " style="left:446.1px;top:669.0px;font-size:60px;transform:scaleX(0.981);transform-origin:0 0;color:var(--hfg)">H0</span>
<span class="t b" style="left:536.3px;top:679.2px;font-size:48px;transform:scaleX(0.884);transform-origin:0 0;color:var(--hfg)">H1</span>
<span class="t b" style="left:604.4px;top:689.3px;font-size:36px;transform:scaleX(1.014);transform-origin:0 0;color:var(--hfg)">H2</span>
<span class="t b" style="left:664.4px;top:694.4px;font-size:30px;transform:scaleX(1.009);transform-origin:0 0;color:var(--hfg)">H3</span>
<span class="t b" style="left:719.0px;top:697.5px;font-size:24px;transform:scaleX(1.022);transform-origin:0 0;color:var(--hfg)">H4</span>
<span class="t lt" style="left:806.2px;top:681.7px;font-size:45px;transform:scaleX(0.955);transform-origin:0 0;color:var(--hfg)">light</span>
<span class="t b" style="left:912.0px;top:679.2px;font-size:48px;transform:scaleX(0.969);transform-origin:0 0;color:var(--hfg)">semibold</span>
<span class="t " style="left:303.0px;top:745.7px;font-size:28px;letter-spacing:-0.17px;">large</span>
<span class="t " style="left:378.0px;top:749.1px;font-size:24px;letter-spacing:0.60px;">default</span>
<span class="t " style="left:468.0px;top:750.8px;font-size:22px;letter-spacing:0.62px;">medium</span>
<span class="t " style="left:563.0px;top:751.5px;font-size:20px;letter-spacing:-0.56px;">small</span>
<span class="t " style="left:622.0px;top:754.2px;font-size:18px;letter-spacing:0.67px;">mini</span>
<span class="t mono" style="left:716.0px;top:752.5px;font-size:22px;letter-spacing:0.02px;">monospaced</span>
<div class="ln" style="left:23px;top:786px;width:1592px;height:2px;"></div>
<div class="bx" style="left:23px;top:803px;width:240px;height:44px;background:var(--cobg);border-color:var(--cobd)"></div>
<span class="t " style="left:36.0px;top:814.3px;font-size:24px;">Dark purple</span>
<svg class="i " style="left:233px;top:820px;color:var(--coar)" width="18" height="11"><use href="#tri"/></svg>
<div class="bx" style="left:283px;top:811px;width:27px;height:28px;background:var(--cbbg);border-color:var(--cbbd);border-radius:5px"></div>
<span class="t " style="left:318.0px;top:814.3px;font-size:24px;letter-spacing:1.08px;">right-to-left</span>
<div class="bx" style="left:471px;top:811px;width:28px;height:28px;background:var(--cbsbg);border-color:var(--cbsbd);border-radius:5px"></div>
<svg class="i " style="left:471px;top:811px;color:var(--cbck)" width="28" height="28"><use href="#check"/></svg>
<span class="t " style="left:506.0px;top:814.3px;font-size:24px;letter-spacing:0.32px;">enabled</span>
<span class="t " style="left:783.6px;top:814.3px;font-size:24px;letter-spacing:-0.42px;">(Java 17;  system scale factor 2.0; Segoe UI 12)</span>
<div class="bx" style="left:1465px;top:803px;width:150px;height:44px;background:var(--clbg);border-color:var(--clbd)"></div>
<span class="t b" style="left:1509.4px;top:814.3px;font-size:24px;letter-spacing:-1.15px;color:var(--clfg)">Close</span>
<span class="t " style="left:1246.4px;top:173.1px;font-size:24px;letter-spacing:-0.68px;">Themes:</span>
<svg class="i " style="left:1390px;top:171px;color:var(--ic)" width="26" height="27"><use href="#dl"/></svg>
<svg class="i " style="left:1440px;top:169px;color:var(--ghic)" width="30" height="29"><use href="#gh"/></svg>
<div class="bx" style="left:1499px;top:162px;width:116px;height:43px;background:var(--cobg);border-color:var(--cobd)"></div>
<span class="t " style="left:1512.6px;top:173.1px;font-size:24px;letter-spacing:0.66px;">all</span>
<svg class="i " style="left:1586px;top:180px;color:var(--coar)" width="17" height="10"><use href="#tri"/></svg>
<div class="bx" style="left:1245px;top:218px;width:370px;height:541px;background:var(--lbg);border-color:var(--lbd);border-radius:0;overflow:hidden"><span class="t " style="left:12.4px;top:5.5px;font-size:24px;">Arc Dark</span><span class="t " style="left:12.4px;top:41.5px;font-size:24px;">Arc Dark - Orange</span><span class="t " style="left:11.4px;top:77.5px;font-size:24px;">Carbon</span><span class="t " style="left:11.4px;top:113.5px;font-size:24px;">Cobalt 2</span><span class="t " style="left:11.4px;top:149.5px;font-size:24px;">Cyan light</span><span class="t " style="left:11.4px;top:185.5px;font-size:24px;">Dark Flat</span><div style="left:0;top:216px;width:346px;height:36px;background:var(--lsel)"></div><span class="t " style="left:11.4px;top:221.5px;font-size:24px;color:var(--lselfg)">Dark purple</span><span class="t " style="left:11.4px;top:257.5px;font-size:24px;">Dracula</span><span class="t " style="left:11.4px;top:293.5px;font-size:24px;">Gradianto Dark Fuchsia</span><span class="t " style="left:11.4px;top:329.5px;font-size:24px;">Gradianto Deep Ocean</span><span class="t " style="left:11.4px;top:365.5px;font-size:24px;">Gradianto Midnight Blue</span><span class="t " style="left:11.4px;top:401.5px;font-size:24px;">Gradianto Nature Green</span><span class="t " style="left:11.4px;top:437.5px;font-size:24px;">Gray</span><span class="t " style="left:11.4px;top:473.5px;font-size:24px;">Gruvbox Dark Hard</span><span class="t " style="left:11.4px;top:509.5px;font-size:24px;">Gruvbox Dark Medium</span><div style="left:346px;top:0;width:19px;height:540px;background:var(--sbtrack)"></div><div style="left:346px;top:72px;width:19px;height:113px;background:var(--sbthumb)"></div></div></div>
</div>
</body></html>
